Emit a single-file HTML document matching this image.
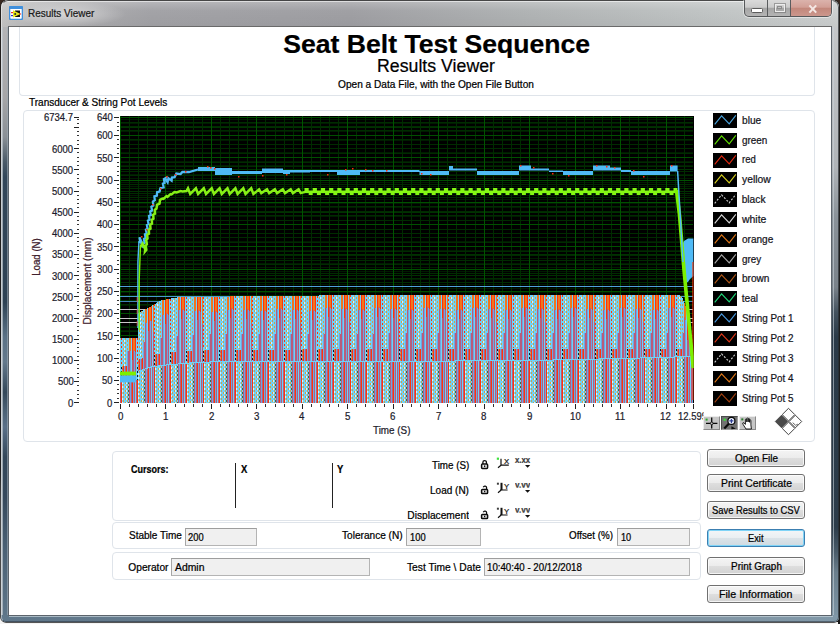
<!DOCTYPE html>
<html lang="en"><head><meta charset="utf-8"><title>Results Viewer</title>
<style>
html,body{margin:0;padding:0}
body{width:840px;height:624px;overflow:hidden;position:relative;background:#4a3a30;font-family:"Liberation Sans",sans-serif;font-size:10px;color:#000}
.abs,.t,.box,.inp,.btn,svg.chart,svg.ic{position:absolute}
.t{white-space:nowrap;line-height:1;transform-origin:0 50%;display:block;-webkit-text-stroke:0.22px}
#win{position:absolute;left:0.6px;top:0;width:838px;height:621.5px;border-radius:7px 7px 5px 5px;background:#a8a8a8;overflow:hidden;box-shadow:0 0 0 0.8px #202020}
#win:after{content:"";position:absolute;left:0;top:0;right:0;bottom:0;border:1px solid rgba(255,255,255,.45);border-top:1px solid rgba(50,50,50,.85);border-right:1.4px solid rgba(40,44,48,.7);border-radius:7px 7px 5px 5px;border-bottom-color:rgba(40,50,60,.5)}
#client{position:absolute;left:8px;top:26px;width:822px;height:588px;background:#fff;border:1px solid #5c646c;border-top-color:#6a6a6a}
.box{border:1px solid #dfe4ea;border-radius:4px;box-sizing:border-box;background:transparent}
.inp{box-sizing:border-box;border:1px solid #b4b4b4;border-top-color:#9d9d9d;border-left-color:#a6a6a6;background:#f0f0f0}
.btn{box-sizing:border-box;width:98px;height:18px;border:1px solid #707070;border-radius:3px;
 background:linear-gradient(#f4f4f4 0%,#ececec 48%,#dedede 52%,#d2d2d2 100%);box-shadow:inset 0 0 0 1px rgba(255,255,255,.75)}
.btn.foc{border-color:#3c7fb1;box-shadow:inset 0 0 0 1px #7fd4f7;background:linear-gradient(#f3f6f8 0%,#eaeff2 48%,#dbe3e8 52%,#cfdae1 100%)}
.lg{position:absolute;left:713px;width:24px;height:15px;background:#000}
</style></head>
<body>
<div class="abs" style="left:0;top:0;width:840px;height:624px;background:linear-gradient(180deg,#3a2a22 0,#241c18 30%,#101010 70%,#181818 100%)"></div>
<div class="abs" style="left:0;top:470px;width:3px;height:154px;background:linear-gradient(180deg,rgba(255,255,255,0),#e8e8e8 30px,#f4f4f4)"></div>
<div class="abs" style="left:0;top:621.5px;width:838px;height:3px;background:#f4f4f4"></div>
<div id="win">
<div class="abs" style="left:0;top:0;width:838px;height:27px;background:linear-gradient(90deg,#c6c6c6 0,#b0b0b2 60px,#a3a3a7 150px,#a0a0a4 350px,#b0b3b4 520px,#c0c4c4 700px,#cdd0d0 838px)"></div>
<div class="abs" style="left:0;top:0;width:838px;height:27px;background:linear-gradient(180deg,rgba(255,255,255,.25) 0,rgba(255,255,255,0) 40%,rgba(0,0,0,.04) 100%)"></div>
<div class="abs" style="left:0;top:27px;width:8px;height:595px;background:linear-gradient(180deg,#b4b4b6 0,#a6a6a8 70px,#8a9096 110px,#4a5a68 135px,#33475a 150px,#2e4254 275px,#5b7286 310px,#64798c 335px,#34485a 365px,#4c6276 385px,#5a7088 400px,#33475a 430px,#36495c 470px,#4a6074 520px,#5f778a 595px)"></div>
<div class="abs" style="left:0;top:27px;width:2.4px;height:595px;background:rgba(190,198,204,.75)"></div>
<div class="abs" style="left:6px;top:27px;width:1.2px;height:590px;background:rgba(160,172,182,.6)"></div>
<div class="abs" style="left:831px;top:27px;width:7px;height:595px;background:linear-gradient(180deg,#c4c6c8 0,#b0b4b8 140px,#8a9299 190px,#7a828a 260px,#44525e 285px,#2a3a48 310px,#2c3c4a 500px,#4a5c6a 525px,#6a7e8c 545px,#8098a8 595px)"></div>
<div class="abs" style="left:832px;top:27px;width:1.2px;height:590px;background:rgba(200,210,216,.6)"></div>
<div class="abs" style="left:0;top:615px;width:838px;height:7px;background:linear-gradient(90deg,#5f778a 0,#6b7f90 300px,#8495a2 600px,#8098a8 838px)"></div>
<div class="abs" style="left:8px;top:616px;width:824px;height:1px;background:rgba(200,212,220,.7)"></div>
<div class="abs" style="left:4px;top:1px;width:830px;height:1px;background:rgba(255,255,255,.55)"></div>
<div class="abs" style="left:6px;top:1px;width:120px;height:26px;background:radial-gradient(ellipse at center,rgba(255,255,255,.5) 0%,rgba(255,255,255,0) 70%)"></div>
</div>
<svg class="ic" style="left:9px;top:6px" width="14" height="14" viewBox="0 0 14 14"><rect x="0.5" y="0.5" width="13" height="13" rx="1.5" fill="#fff" stroke="#3f8fdc" stroke-width="1.6"/><rect x="0.8" y="0.8" width="12.4" height="2.2" fill="#3f8fdc"/><rect x="6" y="4.5" width="5" height="6.5" fill="#111"/><path d="M4 4.2L11.5 8 4 11.6Z" fill="#e8e81a"/><circle cx="6.2" cy="8" r="1" fill="#223"/><rect x="2" y="6" width="2" height="1.2" fill="#e33"/><rect x="2" y="9" width="2" height="1.2" fill="#33c"/><rect x="10.5" y="7.4" width="1.6" height="1.2" fill="#e33"/></svg>
<span class="t" style="left:27.50px;top:7px;font-size:10.6px;color:#1a1a1a;transform:scaleX(0.9405);line-height:12px;">Results Viewer</span>
<div class="abs" style="left:743.5px;top:0;width:88.5px;height:16.5px;border:1px solid #56585a;border-top:none;border-radius:0 0 5px 5px;box-sizing:border-box;background:linear-gradient(#dadada 0%,#cbcbcb 45%,#a6a6a6 52%,#b4b4b4 100%);overflow:hidden;box-shadow:0 0 0 1px rgba(255,255,255,.45)"><div class="abs" style="left:22.5px;top:0;width:1px;height:16px;background:#5a5c5e"></div><div class="abs" style="left:45.7px;top:0;width:1px;height:16px;background:#5a5c5e"></div><div class="abs" style="left:46.7px;top:0;width:42px;height:16px;background:linear-gradient(#dbb3ac 0%,#d29f96 45%,#c2877b 52%,#cc978d 100%)"></div><div class="abs" style="left:6.5px;top:8px;width:9.5px;height:3px;background:#fff;border:1px solid #5c5c5c;border-radius:1.5px;box-sizing:content-box"></div><div class="abs" style="left:30px;top:3.6px;width:8px;height:6px;border:1px solid #ededed;box-shadow:0 0 0 1px rgba(110,110,110,.55);box-sizing:content-box"></div><div class="abs" style="left:32.5px;top:6px;width:3px;height:1.4px;border:1px solid #8c8c8c;box-sizing:content-box"></div><svg class="ic" style="left:62.5px;top:3.6px" width="12" height="10" viewBox="0 0 12 10"><path d="M2.4 1.4L9.2 8.6M9.2 1.4L2.4 8.6" stroke="#f4e7e4" stroke-width="2.1"/></svg></div>
<div id="client"></div>
<div class="box" style="left:19px;top:27px;width:796px;height:69px;border-top:none;border-radius:0 0 4px 4px"></div>
<span class="t" style="left:283.20px;top:29px;font-size:26.6px;font-weight:bold;line-height:30px;">Seat Belt Test Sequence</span>
<span class="t" style="left:377.30px;top:56px;font-size:17.6px;transform:scaleX(1.0081);line-height:20px;">Results Viewer</span>
<span class="t" style="left:338.00px;top:79px;font-size:10.3px;transform:scaleX(0.9838);line-height:11px;">Open a Data File, with the Open File Button</span>
<span class="t" style="left:28.80px;top:97px;font-size:10.3px;transform:scaleX(0.9735);line-height:11px;">Transducer &amp; String Pot Levels</span>
<div class="box" style="left:23px;top:110px;width:792px;height:332px"></div>
<svg class="chart" width="578" height="290" viewBox="118 115 578 290" style="left:118px;top:115px" shape-rendering="crispEdges"><defs><clipPath id="pc"><rect x="119.5" y="116" width="574.2" height="287"/></clipPath></defs><rect x="119.5" y="116" width="574.2" height="287" fill="#000"/>
<path d="M120 398.5H693M120 394.5H693M120 390.5H693M120 385.5H693M120 377.5H693M120 373.5H693M120 368.5H693M120 364.5H693M120 356.5H693M120 351.5H693M120 347.5H693M120 343.5H693M120 335.5H693M120 330.5H693M120 326.5H693M120 322.5H693M120 313.5H693M120 309.5H693M120 305.5H693M120 301.5H693M120 292.5H693M120 288.5H693M120 284.5H693M120 279.5H693M120 271.5H693M120 267.5H693M120 263.5H693M120 258.5H693M120 250.5H693M120 246.5H693M120 241.5H693M120 237.5H693M120 229.5H693M120 224.5H693M120 220.5H693M120 216.5H693M120 207.5H693M120 203.5H693M120 199.5H693M120 195.5H693M120 186.5H693M120 182.5H693M120 178.5H693M120 174.5H693M120 165.5H693M120 161.5H693M120 157.5H693M120 152.5H693M120 144.5H693M120 140.5H693M120 135.5H693M120 131.5H693M120 123.5H693M120 119.5H693" stroke="#001c00" stroke-width="1" fill="none"/>
<path d="M120 402.5H693M120 381.5H693M120 360.5H693M120 339.5H693M120 318.5H693M120 296.5H693M120 275.5H693M120 254.5H693M120 233.5H693M120 212.5H693M120 191.5H693M120 169.5H693M120 148.5H693M120 127.5H693" stroke="#003200" stroke-width="1" fill="none"/>
<path d="M129.5 116V403M138.5 116V403M147.5 116V403M156.5 116V403M175.5 116V403M184.5 116V403M193.5 116V403M202.5 116V403M220.5 116V403M229.5 116V403M238.5 116V403M247.5 116V403M265.5 116V403M275.5 116V403M284.5 116V403M293.5 116V403M311.5 116V403M320.5 116V403M329.5 116V403M338.5 116V403M356.5 116V403M365.5 116V403M375.5 116V403M384.5 116V403M402.5 116V403M411.5 116V403M420.5 116V403M429.5 116V403M447.5 116V403M456.5 116V403M465.5 116V403M475.5 116V403M493.5 116V403M502.5 116V403M511.5 116V403M520.5 116V403M538.5 116V403M547.5 116V403M556.5 116V403M566.5 116V403M584.5 116V403M593.5 116V403M602.5 116V403M611.5 116V403M629.5 116V403M638.5 116V403M647.5 116V403M656.5 116V403M675.5 116V403M684.5 116V403" stroke="#002c00" stroke-width="1" fill="none"/>
<path d="M120 398.5H693M120 393.5H693M120 389.5H693M120 384.5H693M120 376.5H693M120 371.5H693M120 367.5H693M120 362.5H693M120 353.5H693M120 349.5H693M120 344.5H693M120 340.5H693M120 331.5H693M120 327.5H693M120 322.5H693M120 318.5H693M120 309.5H693M120 304.5H693M120 300.5H693M120 295.5H693M120 286.5H693M120 282.5H693M120 278.5H693M120 273.5H693M120 264.5H693M120 260.5H693M120 255.5H693M120 251.5H693M120 242.5H693M120 237.5H693M120 233.5H693M120 229.5H693M120 220.5H693M120 215.5H693M120 211.5H693M120 206.5H693M120 197.5H693M120 193.5H693M120 188.5H693M120 184.5H693M120 175.5H693M120 171.5H693M120 166.5H693M120 162.5H693M120 153.5H693M120 148.5H693M120 144.5H693M120 139.5H693M120 130.5H693M120 126.5H693M120 122.5H693" stroke="#002c00" stroke-width="1" fill="none"/>
<path d="M120.5 116V403M165.5 116V403M211.5 116V403M256.5 116V403M302.5 116V403M347.5 116V403M393.5 116V403M438.5 116V403M484.5 116V403M529.5 116V403M575.5 116V403M620.5 116V403M666.5 116V403" stroke="#005400" stroke-width="1" fill="none"/>
<path d="M120 402.5H693M120 380.5H693M120 358.5H693M120 335.5H693M120 313.5H693M120 291.5H693M120 269.5H693M120 246.5H693M120 224.5H693M120 202.5H693M120 180.5H693M120 157.5H693M120 135.5H693M120 117.5H693" stroke="#005000" stroke-width="1" fill="none"/><g clip-path="url(#pc)"><path d="M120 286.5H693" stroke="#4fa3d8" stroke-width="1.3"/>
<path d="M120 296.5H693" stroke="#4a9ad0" stroke-width="1.3"/>
<path d="M120 301.5H693" stroke="#3f86b8" stroke-width="1.3"/>
<path d="M120 309.5H693" stroke="#c8c8c8" stroke-width="1"/>
<path d="M120 318.5H693" stroke="#c8c8c8" stroke-width="1"/>
<path d="M120 322.5H693" stroke="#c8c8c8" stroke-width="1"/><path d="M120.5 338.0V380.0M121.5 338.0V380.0M122.5 338.0V366.0M122.5 380.0V403.0M123.5 338.0V366.0M123.5 380.0V403.0M124.5 338.0V366.0M124.5 380.0V403.0M125.5 338.0V366.0M125.5 380.0V403.0M126.5 338.0V366.0M126.5 380.0V403.0M127.5 338.0V351.0M127.5 380.0V403.0M128.5 338.0V351.0M128.5 380.0V403.0M131.5 338.0V380.0M135.5 380.0V403.0M136.5 338.0V380.0M137.5 338.0V380.0M138.5 313.0V359.0M138.5 371.0V403.0M139.5 312.2V358.7M139.5 370.7V403.0M140.5 311.5V358.3M140.5 370.3V403.0M141.5 311.0V358.0M141.5 370.0V403.0M142.5 310.5V357.7M142.5 369.7V403.0M143.5 310.0V342.3M143.5 369.3V403.0M144.5 309.5V342.0M144.5 369.0V403.0M147.5 308.0V368.0M151.5 366.9V403.0M152.5 305.3V366.7M154.5 304.1V366.5M155.5 303.5V353.9M155.5 366.3V403.0M156.5 302.9V353.7M156.5 366.2V403.0M157.5 302.3V353.5M157.5 366.1V403.0M158.5 301.7V353.2M158.5 365.9V403.0M159.5 301.1V353.0M159.5 365.8V403.0M160.5 300.5V337.8M160.5 365.7V403.0M161.5 300.3V337.6M161.5 365.5V403.0M164.5 299.7V365.1M168.5 364.7V403.0M169.5 298.7V364.7M170.5 298.5V364.6M171.5 298.4V351.3M171.5 364.5V403.0M172.5 298.2V351.3M172.5 364.4V403.0M173.5 298.1V351.2M173.5 364.3V403.0M174.5 297.9V351.1M174.5 364.2V403.0M175.5 297.8V351.1M175.5 364.1V403.0M176.5 297.6V336.0M176.5 364.1V403.0M177.5 297.4V335.9M177.5 364.0V403.0M180.5 297.0V363.7M184.5 363.4V403.0M185.5 296.9V363.3M186.5 296.9V363.2M187.5 296.9V350.3M187.5 363.1V403.0M188.5 296.9V350.3M188.5 363.0V403.0M189.5 296.9V350.2M189.5 362.9V403.0M190.5 296.9V350.1M190.5 362.9V403.0M191.5 296.9V350.1M191.5 362.8V403.0M192.5 296.9V335.0M192.5 362.7V403.0M193.5 296.9V334.9M193.5 362.6V403.0M196.5 296.8V362.3M200.5 362.0V403.0M201.5 296.8V362.0M203.5 296.8V362.0M204.5 296.8V349.5M204.5 362.0V403.0M205.5 296.7V349.5M205.5 362.0V403.0M206.5 296.7V349.5M206.5 362.0V403.0M207.5 296.7V349.5M207.5 362.0V403.0M208.5 296.7V349.5M208.5 362.0V403.0M209.5 296.7V334.4M209.5 362.0V403.0M210.5 296.7V334.4M210.5 361.9V403.0M213.5 296.6V361.9M217.5 361.9V403.0M218.5 296.6V361.9M219.5 296.6V361.9M220.5 296.6V349.4M220.5 361.9V403.0M221.5 296.5V349.4M221.5 361.9V403.0M222.5 296.5V349.4M222.5 361.9V403.0M223.5 296.5V349.4M223.5 361.9V403.0M224.5 296.5V349.4M224.5 361.9V403.0M225.5 296.5V334.4M225.5 361.9V403.0M226.5 296.5V334.3M226.5 361.9V403.0M229.5 296.5V361.9M233.5 361.8V403.0M234.5 296.4V361.8M235.5 296.4V361.8M236.5 296.4V349.3M236.5 361.8V403.0M237.5 296.4V349.3M237.5 361.8V403.0M238.5 296.3V349.3M238.5 361.8V403.0M239.5 296.3V349.3M239.5 361.8V403.0M240.5 296.3V349.3M240.5 361.8V403.0M241.5 296.3V334.3M241.5 361.8V403.0M242.5 296.3V334.2M242.5 361.8V403.0M245.5 296.3V361.8M249.5 361.8V403.0M250.5 296.2V361.8M252.5 296.2V361.7M253.5 296.2V349.2M253.5 361.7V403.0M254.5 296.2V349.2M254.5 361.7V403.0M255.5 296.1V349.2M255.5 361.7V403.0M256.5 296.1V349.2M256.5 361.7V403.0M257.5 296.1V349.2M257.5 361.7V403.0M258.5 296.1V334.2M258.5 361.7V403.0M259.5 296.1V334.1M259.5 361.7V403.0M262.5 296.1V361.7M266.5 361.7V403.0M267.5 296.0V361.7M268.5 296.0V361.7M269.5 296.0V349.1M269.5 361.7V403.0M270.5 296.0V349.1M270.5 361.6V403.0M271.5 295.9V349.1M271.5 361.6V403.0M272.5 295.9V349.1M272.5 361.6V403.0M273.5 295.9V349.1M273.5 361.6V403.0M274.5 295.9V334.1M274.5 361.6V403.0M275.5 295.9V334.1M275.5 361.6V403.0M278.5 295.9V361.6M282.5 361.6V403.0M283.5 295.8V361.6M284.5 295.8V361.6M285.5 295.8V349.0M285.5 361.6V403.0M286.5 295.8V349.0M286.5 361.6V403.0M287.5 295.8V349.0M287.5 361.6V403.0M288.5 295.7V349.0M288.5 361.6V403.0M289.5 295.7V349.0M289.5 361.6V403.0M290.5 295.7V334.0M290.5 361.6V403.0M291.5 295.7V334.0M291.5 361.5V403.0M294.5 295.7V361.5M298.5 361.5V403.0M299.5 295.6V361.5M301.5 295.6V361.5M302.5 295.6V348.9M302.5 361.5V403.0M303.5 295.6V348.9M303.5 361.5V403.0M304.5 295.6V348.9M304.5 361.5V403.0M305.5 295.6V348.9M305.5 361.5V403.0M306.5 295.6V348.9M306.5 361.5V403.0M307.5 295.5V333.9M307.5 361.5V403.0M308.5 295.5V333.9M308.5 361.5V403.0M311.5 295.5V361.5M315.5 361.4V403.0M316.5 295.5V361.4M317.5 295.5V361.4M318.5 295.5V348.8M318.5 361.4V403.0M319.5 295.4V348.8M319.5 361.4V403.0M320.5 295.4V348.8M320.5 361.4V403.0M321.5 295.4V348.8M321.5 361.4V403.0M322.5 295.4V348.8M322.5 361.4V403.0M323.5 295.4V333.8M323.5 361.4V403.0M324.5 295.4V333.8M324.5 361.4V403.0M327.5 295.4V361.4M331.5 361.4V403.0M332.5 295.3V361.4M333.5 295.3V361.4M334.5 295.3V348.7M334.5 361.4V403.0M335.5 295.3V348.7M335.5 361.4V403.0M336.5 295.3V348.7M336.5 361.4V403.0M337.5 295.3V348.7M337.5 361.4V403.0M338.5 295.3V348.7M338.5 361.4V403.0M339.5 295.3V333.7M339.5 361.4V403.0M340.5 295.3V333.7M340.5 361.4V403.0M343.5 295.3V361.4M347.5 361.3V403.0M348.5 295.2V361.3M350.5 295.2V361.3M351.5 295.2V348.6M351.5 361.3V403.0M352.5 295.2V348.6M352.5 361.3V403.0M353.5 295.2V348.6M353.5 361.3V403.0M354.5 295.2V348.6M354.5 361.3V403.0M355.5 295.2V348.6M355.5 361.3V403.0M356.5 295.2V333.6M356.5 361.3V403.0M357.5 295.1V333.6M357.5 361.3V403.0M360.5 295.1V361.3M364.5 361.3V403.0M365.5 295.1V361.3M366.5 295.1V361.3M367.5 295.1V348.5M367.5 361.3V403.0M368.5 295.1V348.5M368.5 361.3V403.0M369.5 295.0V348.5M369.5 361.3V403.0M370.5 295.0V348.5M370.5 361.3V403.0M371.5 295.0V348.5M371.5 361.3V403.0M372.5 295.0V333.5M372.5 361.3V403.0M373.5 295.0V333.5M373.5 361.3V403.0M376.5 295.0V361.2M380.5 361.2V403.0M381.5 295.0V361.2M382.5 294.9V361.2M383.5 294.9V348.4M383.5 361.2V403.0M384.5 294.9V348.4M384.5 361.2V403.0M385.5 294.9V348.4M385.5 361.2V403.0M386.5 294.9V348.4M386.5 361.2V403.0M387.5 294.9V348.4M387.5 361.2V403.0M388.5 294.9V333.4M388.5 361.2V403.0M389.5 294.9V333.4M389.5 361.2V403.0M392.5 294.9V361.2M396.5 361.2V403.0M397.5 294.8V361.2M399.5 294.8V361.2M400.5 294.8V348.3M400.5 361.2V403.0M401.5 294.8V348.3M401.5 361.2V403.0M402.5 294.8V348.3M402.5 361.2V403.0M403.5 294.8V348.3M403.5 361.2V403.0M404.5 294.8V348.3M404.5 361.2V403.0M405.5 294.8V333.3M405.5 361.1V403.0M406.5 294.8V333.3M406.5 361.1V403.0M409.5 294.8V361.1M413.5 361.1V403.0M414.5 294.8V361.1M415.5 294.8V361.1M416.5 294.8V348.3M416.5 361.1V403.0M417.5 294.8V348.3M417.5 361.1V403.0M418.5 294.8V348.3M418.5 361.1V403.0M419.5 294.8V348.3M419.5 361.1V403.0M420.5 294.8V348.3M420.5 361.1V403.0M421.5 294.8V333.3M421.5 361.1V403.0M422.5 294.8V333.3M422.5 361.1V403.0M425.5 294.8V361.1M429.5 361.1V403.0M430.5 294.8V361.1M431.5 294.8V361.1M432.5 294.8V348.3M432.5 361.1V403.0M433.5 294.8V348.3M433.5 361.1V403.0M434.5 294.8V348.3M434.5 361.1V403.0M435.5 294.8V348.3M435.5 361.1V403.0M436.5 294.8V348.3M436.5 361.0V403.0M437.5 294.8V333.3M437.5 361.0V403.0M438.5 294.8V333.3M438.5 361.0V403.0M441.5 294.8V361.0M445.5 361.0V403.0M446.5 294.8V361.0M448.5 294.8V361.0M449.5 294.8V348.2M449.5 361.0V403.0M450.5 294.8V348.2M450.5 361.0V403.0M451.5 294.8V348.2M451.5 361.0V403.0M452.5 294.8V348.2M452.5 361.0V403.0M453.5 294.8V348.2M453.5 361.0V403.0M454.5 294.8V333.2M454.5 361.0V403.0M455.5 294.8V333.2M455.5 360.9V403.0M458.5 294.8V360.9M462.5 360.9V403.0M463.5 294.8V360.9M464.5 294.8V360.9M465.5 294.8V348.2M465.5 360.9V403.0M466.5 294.8V348.2M466.5 360.8V403.0M467.5 294.8V348.2M467.5 360.8V403.0M468.5 294.8V348.2M468.5 360.8V403.0M469.5 294.8V348.2M469.5 360.8V403.0M470.5 294.7V333.2M470.5 360.8V403.0M471.5 294.7V333.2M471.5 360.8V403.0M474.5 294.7V360.8M478.5 360.7V403.0M479.5 294.7V360.7M480.5 294.7V360.7M481.5 294.7V348.2M481.5 360.7V403.0M482.5 294.7V348.2M482.5 360.7V403.0M483.5 294.7V348.2M483.5 360.7V403.0M484.5 294.7V348.2M484.5 360.7V403.0M485.5 294.7V348.2M485.5 360.6V403.0M486.5 294.7V333.2M486.5 360.6V403.0M487.5 294.7V333.2M487.5 360.6V403.0M490.5 294.7V360.6M494.5 360.6V403.0M495.5 294.7V360.6M497.5 294.7V360.5M498.5 294.7V348.2M498.5 360.5V403.0M499.5 294.7V348.2M499.5 360.5V403.0M500.5 294.7V348.2M500.5 360.5V403.0M501.5 294.7V348.2M501.5 360.5V403.0M502.5 294.7V348.2M502.5 360.5V403.0M503.5 294.7V333.2M503.5 360.5V403.0M504.5 294.7V333.2M504.5 360.5V403.0M507.5 294.7V360.4M511.5 360.4V403.0M512.5 294.7V360.4M513.5 294.7V360.4M514.5 294.7V348.2M514.5 360.4V403.0M515.5 294.7V348.2M515.5 360.4V403.0M516.5 294.7V348.2M516.5 360.3V403.0M517.5 294.7V348.2M517.5 360.3V403.0M518.5 294.7V348.2M518.5 360.3V403.0M519.5 294.7V333.2M519.5 360.3V403.0M520.5 294.7V333.2M520.5 360.3V403.0M523.5 294.7V360.3M527.5 360.2V403.0M528.5 294.7V360.2M529.5 294.7V360.2M530.5 294.7V348.2M530.5 360.2V403.0M531.5 294.7V348.2M531.5 360.2V403.0M532.5 294.7V348.2M532.5 360.2V403.0M533.5 294.7V348.2M533.5 360.2V403.0M534.5 294.7V348.2M534.5 360.2V403.0M535.5 294.7V333.2M535.5 360.1V403.0M536.5 294.7V333.2M536.5 360.1V403.0M539.5 294.7V360.1M543.5 360.1V403.0M544.5 294.7V360.1M546.5 294.7V360.0M547.5 294.7V348.1M547.5 360.0V403.0M548.5 294.7V348.1M548.5 360.0V403.0M549.5 294.7V348.1M549.5 360.0V403.0M550.5 294.7V348.1M550.5 360.0V403.0M551.5 294.7V348.1M551.5 360.0V403.0M552.5 294.7V333.1M552.5 360.0V403.0M553.5 294.7V333.1M553.5 359.9V403.0M556.5 294.7V359.9M560.5 359.8V403.0M561.5 294.7V359.8M562.5 294.7V359.7M563.5 294.7V348.1M563.5 359.7V403.0M564.5 294.7V348.1M564.5 359.7V403.0M565.5 294.7V348.1M565.5 359.7V403.0M566.5 294.7V348.1M566.5 359.7V403.0M567.5 294.7V348.1M567.5 359.6V403.0M568.5 294.7V333.1M568.5 359.6V403.0M569.5 294.7V333.1M569.5 359.6V403.0M572.5 294.7V359.5M576.5 359.4V403.0M577.5 294.7V359.4M578.5 294.7V359.4M579.5 294.7V348.1M579.5 359.4V403.0M580.5 294.7V348.1M580.5 359.4V403.0M581.5 294.7V348.1M581.5 359.3V403.0M582.5 294.7V348.1M582.5 359.3V403.0M583.5 294.7V348.1M583.5 359.3V403.0M584.5 294.7V333.1M584.5 359.3V403.0M585.5 294.7V333.1M585.5 359.2V403.0M588.5 294.7V359.2M592.5 359.1V403.0M593.5 294.7V359.1M595.5 294.7V359.0M596.5 294.7V348.1M596.5 359.0V403.0M597.5 294.7V348.1M597.5 359.0V403.0M598.5 294.7V348.1M598.5 359.0V403.0M599.5 294.7V348.1M599.5 358.9V403.0M600.5 294.7V348.1M600.5 358.9V403.0M601.5 294.7V333.1M601.5 358.9V403.0M602.5 294.7V333.1M602.5 358.9V403.0M605.5 294.7V358.8M609.5 358.7V403.0M610.5 294.6V358.7M611.5 294.6V358.7M612.5 294.6V348.1M612.5 358.7V403.0M613.5 294.6V348.1M613.5 358.6V403.0M614.5 294.6V348.1M614.5 358.6V403.0M615.5 294.6V348.1M615.5 358.6V403.0M616.5 294.6V348.1M616.5 358.6V403.0M617.5 294.6V333.1M617.5 358.6V403.0M618.5 294.6V333.1M618.5 358.5V403.0M621.5 294.6V358.5M625.5 358.4V403.0M626.5 294.6V358.3M627.5 294.6V358.3M628.5 294.6V348.1M628.5 358.3V403.0M629.5 294.6V348.1M629.5 358.2V403.0M630.5 294.6V348.1M630.5 358.2V403.0M631.5 294.6V348.1M631.5 358.2V403.0M632.5 294.6V348.1M632.5 358.2V403.0M633.5 294.6V333.0M633.5 358.1V403.0M634.5 294.6V333.0M634.5 358.1V403.0M637.5 294.6V358.0M641.5 357.9V403.0M642.5 294.6V357.9M644.5 294.6V357.8M645.5 294.6V348.0M645.5 357.8V403.0M646.5 294.6V348.0M646.5 357.8V403.0M647.5 294.6V348.0M647.5 357.7V403.0M648.5 294.6V348.0M648.5 357.7V403.0M649.5 294.6V348.0M649.5 357.7V403.0M650.5 294.6V333.0M650.5 357.6V403.0M651.5 294.6V333.0M651.5 357.6V403.0M654.5 294.6V357.5M658.5 357.4V403.0M659.5 294.6V357.4M660.5 294.6V357.3M661.5 294.6V348.0M661.5 357.3V403.0M662.5 294.6V348.0M662.5 357.3V403.0M663.5 294.6V348.0M663.5 357.3V403.0M664.5 294.6V348.0M664.5 357.2V403.0M665.5 294.6V348.0M665.5 357.2V403.0M666.5 294.6V333.0M666.5 357.2V403.0M667.5 294.6V333.0M667.5 357.1V403.0M670.5 294.6V357.1M674.5 356.9V403.0M675.5 294.6V356.9M676.5 294.6V356.9M677.5 294.6V348.0M677.5 356.9V403.0M678.5 294.6V348.0M678.5 356.8V403.0M679.5 294.6V348.0M679.5 356.8V403.0M680.5 295.7V348.0M680.5 356.8V403.0M681.5 296.9V348.0M681.5 356.8V403.0M682.5 298.0V333.0M682.5 356.8V403.0M683.5 300.7V333.0M683.5 356.8V403.0M686.5 311.3V356.8M690.5 356.8V403.0M691.5 344.8V356.8" stroke="#70d2f8" stroke-width="1" fill="none"/>
<path d="M120.5 380.0V403.0M122.5 366.0V380.0M125.5 366.0V380.0M128.5 351.0V380.0M129.5 351.0V380.0M129.5 380.0V403.0M131.5 380.0V403.0M132.5 360.0V380.0M133.5 350.0V380.0M134.5 380.0V403.0M135.5 352.0V380.0M136.5 380.0V403.0M138.5 359.0V371.0M141.5 358.0V370.0M144.5 342.0V369.0M145.5 323.0V368.7M145.5 368.7V403.0M147.5 368.0V403.0M148.5 330.5V367.7M149.5 320.0V367.3M150.5 367.0V403.0M151.5 320.9V366.9M152.5 366.7V403.0M153.5 331.7V366.6M155.5 353.9V366.3M158.5 353.2V365.9M161.5 337.6V365.5M162.5 315.1V365.4M162.5 365.4V403.0M164.5 365.1V403.0M165.5 323.5V365.0M166.5 313.3V364.9M167.5 364.8V403.0M168.5 314.9V364.7M169.5 364.7V403.0M171.5 351.3V364.5M174.5 351.1V364.2M177.5 335.9V364.0M178.5 310.3V363.9M178.5 363.9V403.0M180.5 363.7V403.0M181.5 319.0V363.6M182.5 309.0V363.5M183.5 363.5V403.0M184.5 311.0V363.4M185.5 363.3V403.0M187.5 350.3V363.1M190.5 350.1V362.9M193.5 334.9V362.6M194.5 310.9V362.5M194.5 362.5V403.0M196.5 362.3V403.0M197.5 319.8V362.3M198.5 309.8V362.2M199.5 362.1V403.0M200.5 311.8V362.0M201.5 362.0V403.0M202.5 323.8V362.0M204.5 349.5V362.0M207.5 349.5V362.0M210.5 334.4V361.9M211.5 311.7V361.9M211.5 361.9V403.0M213.5 361.9V403.0M214.5 320.6V361.9M215.5 310.6V361.9M216.5 361.9V403.0M217.5 312.6V361.9M218.5 361.9V403.0M220.5 349.4V361.9M223.5 349.4V361.9M226.5 334.3V361.9M227.5 309.5V361.9M227.5 361.9V403.0M229.5 361.9V403.0M230.5 318.4V361.9M231.5 308.4V361.8M232.5 361.8V403.0M233.5 310.4V361.8M234.5 361.8V403.0M236.5 349.3V361.8M239.5 349.3V361.8M242.5 334.2V361.8M243.5 310.3V361.8M243.5 361.8V403.0M245.5 361.8V403.0M246.5 319.2V361.8M247.5 309.2V361.8M248.5 361.8V403.0M249.5 311.2V361.8M250.5 361.8V403.0M251.5 323.2V361.7M253.5 349.2V361.7M256.5 349.2V361.7M259.5 334.1V361.7M260.5 311.1V361.7M260.5 361.7V403.0M262.5 361.7V403.0M263.5 320.0V361.7M264.5 310.0V361.7M265.5 361.7V403.0M266.5 312.0V361.7M267.5 361.7V403.0M269.5 349.1V361.7M272.5 349.1V361.6M275.5 334.1V361.6M276.5 308.9V361.6M276.5 361.6V403.0M278.5 361.6V403.0M279.5 317.9V361.6M280.5 307.8V361.6M281.5 361.6V403.0M282.5 309.8V361.6M283.5 361.6V403.0M285.5 349.0V361.6M288.5 349.0V361.6M291.5 334.0V361.5M292.5 309.7V361.5M292.5 361.5V403.0M294.5 361.5V403.0M295.5 318.7V361.5M296.5 308.6V361.5M297.5 361.5V403.0M298.5 310.6V361.5M299.5 361.5V403.0M300.5 322.6V361.5M302.5 348.9V361.5M305.5 348.9V361.5M308.5 333.9V361.5M309.5 310.5V361.5M309.5 361.5V403.0M311.5 361.5V403.0M312.5 319.5V361.5M313.5 309.5V361.5M314.5 361.5V403.0M315.5 311.5V361.4M316.5 361.4V403.0M318.5 348.8V361.4M321.5 348.8V361.4M324.5 333.8V361.4M325.5 308.4V361.4M325.5 361.4V403.0M327.5 361.4V403.0M328.5 317.4V361.4M329.5 307.4V361.4M330.5 361.4V403.0M331.5 309.4V361.4M332.5 361.4V403.0M334.5 348.7V361.4M337.5 348.7V361.4M340.5 333.7V361.4M341.5 309.3V361.4M341.5 361.4V403.0M343.5 361.4V403.0M344.5 318.2V361.4M345.5 308.2V361.4M346.5 361.3V403.0M347.5 310.2V361.3M348.5 361.3V403.0M349.5 322.2V361.3M351.5 348.6V361.3M354.5 348.6V361.3M357.5 333.6V361.3M358.5 310.1V361.3M358.5 361.3V403.0M360.5 361.3V403.0M361.5 319.1V361.3M362.5 309.1V361.3M363.5 361.3V403.0M364.5 311.1V361.3M365.5 361.3V403.0M367.5 348.5V361.3M370.5 348.5V361.3M373.5 333.5V361.3M374.5 308.0V361.3M374.5 361.3V403.0M376.5 361.2V403.0M377.5 317.0V361.2M378.5 307.0V361.2M379.5 361.2V403.0M380.5 309.0V361.2M381.5 361.2V403.0M383.5 348.4V361.2M386.5 348.4V361.2M389.5 333.4V361.2M390.5 308.9V361.2M390.5 361.2V403.0M392.5 361.2V403.0M393.5 317.9V361.2M394.5 307.8V361.2M395.5 361.2V403.0M396.5 309.8V361.2M397.5 361.2V403.0M398.5 321.8V361.2M400.5 348.3V361.2M403.5 348.3V361.2M406.5 333.3V361.1M407.5 309.8V361.1M407.5 361.1V403.0M409.5 361.1V403.0M410.5 318.8V361.1M411.5 308.8V361.1M412.5 361.1V403.0M413.5 310.8V361.1M414.5 361.1V403.0M416.5 348.3V361.1M419.5 348.3V361.1M422.5 333.3V361.1M423.5 307.8V361.1M423.5 361.1V403.0M425.5 361.1V403.0M426.5 316.8V361.1M427.5 306.8V361.1M428.5 361.1V403.0M429.5 308.8V361.1M430.5 361.1V403.0M432.5 348.3V361.1M435.5 348.3V361.1M438.5 333.3V361.0M439.5 308.8V361.0M439.5 361.0V403.0M441.5 361.0V403.0M442.5 317.8V361.0M443.5 307.8V361.0M444.5 361.0V403.0M445.5 309.8V361.0M446.5 361.0V403.0M447.5 321.8V361.0M449.5 348.2V361.0M452.5 348.2V361.0M455.5 333.2V360.9M456.5 309.8V360.9M456.5 360.9V403.0M458.5 360.9V403.0M459.5 318.8V360.9M460.5 308.8V360.9M461.5 360.9V403.0M462.5 310.8V360.9M463.5 360.9V403.0M465.5 348.2V360.9M468.5 348.2V360.8M471.5 333.2V360.8M472.5 307.7V360.8M472.5 360.8V403.0M474.5 360.8V403.0M475.5 316.7V360.8M476.5 306.7V360.7M477.5 360.7V403.0M478.5 308.7V360.7M479.5 360.7V403.0M481.5 348.2V360.7M484.5 348.2V360.7M487.5 333.2V360.6M488.5 308.7V360.6M488.5 360.6V403.0M490.5 360.6V403.0M491.5 317.7V360.6M492.5 307.7V360.6M493.5 360.6V403.0M494.5 309.7V360.6M495.5 360.6V403.0M496.5 321.7V360.5M498.5 348.2V360.5M501.5 348.2V360.5M504.5 333.2V360.5M505.5 309.7V360.4M505.5 360.4V403.0M507.5 360.4V403.0M508.5 318.7V360.4M509.5 308.7V360.4M510.5 360.4V403.0M511.5 310.7V360.4M512.5 360.4V403.0M514.5 348.2V360.4M517.5 348.2V360.3M520.5 333.2V360.3M521.5 307.7V360.3M521.5 360.3V403.0M523.5 360.3V403.0M524.5 316.7V360.3M525.5 306.7V360.2M526.5 360.2V403.0M527.5 308.7V360.2M528.5 360.2V403.0M530.5 348.2V360.2M533.5 348.2V360.2M536.5 333.2V360.1M537.5 308.7V360.1M537.5 360.1V403.0M539.5 360.1V403.0M540.5 317.7V360.1M541.5 307.7V360.1M542.5 360.1V403.0M543.5 309.7V360.1M544.5 360.1V403.0M545.5 321.7V360.1M547.5 348.1V360.0M550.5 348.1V360.0M553.5 333.1V359.9M554.5 309.7V359.9M554.5 359.9V403.0M556.5 359.9V403.0M557.5 318.7V359.9M558.5 308.7V359.8M559.5 359.8V403.0M560.5 310.7V359.8M561.5 359.8V403.0M563.5 348.1V359.7M566.5 348.1V359.7M569.5 333.1V359.6M570.5 307.7V359.6M570.5 359.6V403.0M572.5 359.5V403.0M573.5 316.7V359.5M574.5 306.7V359.5M575.5 359.5V403.0M576.5 308.7V359.4M577.5 359.4V403.0M579.5 348.1V359.4M582.5 348.1V359.3M585.5 333.1V359.2M586.5 308.7V359.2M586.5 359.2V403.0M588.5 359.2V403.0M589.5 317.7V359.2M590.5 307.7V359.1M591.5 359.1V403.0M592.5 309.7V359.1M593.5 359.1V403.0M594.5 321.7V359.1M596.5 348.1V359.0M599.5 348.1V358.9M602.5 333.1V358.9M603.5 309.7V358.9M603.5 358.9V403.0M605.5 358.8V403.0M606.5 318.7V358.8M607.5 308.7V358.8M608.5 358.8V403.0M609.5 310.7V358.7M610.5 358.7V403.0M612.5 348.1V358.7M615.5 348.1V358.6M618.5 333.1V358.5M619.5 307.6V358.5M619.5 358.5V403.0M621.5 358.5V403.0M622.5 316.6V358.4M623.5 306.6V358.4M624.5 358.4V403.0M625.5 308.6V358.4M626.5 358.3V403.0M628.5 348.1V358.3M631.5 348.1V358.2M634.5 333.0V358.1M635.5 308.6V358.1M635.5 358.1V403.0M637.5 358.0V403.0M638.5 317.6V358.0M639.5 307.6V358.0M640.5 357.9V403.0M641.5 309.6V357.9M642.5 357.9V403.0M643.5 321.6V357.8M645.5 348.0V357.8M648.5 348.0V357.7M651.5 333.0V357.6M652.5 309.6V357.6M652.5 357.6V403.0M654.5 357.5V403.0M655.5 318.6V357.5M656.5 308.6V357.5M657.5 357.4V403.0M658.5 310.6V357.4M659.5 357.4V403.0M661.5 348.0V357.3M664.5 348.0V357.2M667.5 333.0V357.1M668.5 307.6V357.1M668.5 357.1V403.0M670.5 357.1V403.0M671.5 316.6V357.0M672.5 306.6V357.0M673.5 357.0V403.0M674.5 308.6V356.9M675.5 356.9V403.0M677.5 348.0V356.9M680.5 348.0V356.8M683.5 333.0V356.8M684.5 317.3V356.8M684.5 356.8V403.0M686.5 356.8V403.0M687.5 339.7V356.8M688.5 335.0V356.8M689.5 356.8V403.0M690.5 351.4V356.8M691.5 356.8V403.0" stroke="#b85c7c" stroke-width="1" fill="none"/>
<path d="M121.5 380.0V403.0M123.5 366.0V380.0M126.5 366.0V380.0M132.5 338.0V360.0M132.5 380.0V403.0M135.5 338.0V352.0M137.5 380.0V403.0M139.5 358.7V370.7M142.5 357.7V369.7M148.5 307.5V330.5M148.5 367.7V403.0M151.5 305.9V320.9M154.5 366.5V403.0M156.5 353.7V366.2M159.5 353.0V365.8M165.5 299.5V323.5M165.5 365.0V403.0M168.5 298.9V314.9M170.5 364.6V403.0M172.5 351.3V364.4M175.5 351.1V364.1M181.5 297.0V319.0M181.5 363.6V403.0M184.5 297.0V311.0M186.5 363.2V403.0M188.5 350.3V363.0M191.5 350.1V362.8M197.5 296.8V319.8M197.5 362.3V403.0M200.5 296.8V311.8M203.5 362.0V403.0M205.5 349.5V362.0M208.5 349.5V362.0M214.5 296.6V320.6M214.5 361.9V403.0M217.5 296.6V312.6M219.5 361.9V403.0M221.5 349.4V361.9M224.5 349.4V361.9M230.5 296.4V318.4M230.5 361.9V403.0M233.5 296.4V310.4M235.5 361.8V403.0M237.5 349.3V361.8M240.5 349.3V361.8M246.5 296.2V319.2M246.5 361.8V403.0M249.5 296.2V311.2M252.5 361.7V403.0M254.5 349.2V361.7M257.5 349.2V361.7M263.5 296.0V320.0M263.5 361.7V403.0M266.5 296.0V312.0M268.5 361.7V403.0M270.5 349.1V361.6M273.5 349.1V361.6M279.5 295.9V317.9M279.5 361.6V403.0M282.5 295.8V309.8M284.5 361.6V403.0M286.5 349.0V361.6M289.5 349.0V361.6M295.5 295.7V318.7M295.5 361.5V403.0M298.5 295.6V310.6M301.5 361.5V403.0M303.5 348.9V361.5M306.5 348.9V361.5M312.5 295.5V319.5M312.5 361.5V403.0M315.5 295.5V311.5M317.5 361.4V403.0M319.5 348.8V361.4M322.5 348.8V361.4M328.5 295.4V317.4M328.5 361.4V403.0M331.5 295.4V309.4M333.5 361.4V403.0M335.5 348.7V361.4M338.5 348.7V361.4M344.5 295.2V318.2M344.5 361.4V403.0M347.5 295.2V310.2M350.5 361.3V403.0M352.5 348.6V361.3M355.5 348.6V361.3M361.5 295.1V319.1M361.5 361.3V403.0M364.5 295.1V311.1M366.5 361.3V403.0M368.5 348.5V361.3M371.5 348.5V361.3M377.5 295.0V317.0M377.5 361.2V403.0M380.5 295.0V309.0M382.5 361.2V403.0M384.5 348.4V361.2M387.5 348.4V361.2M393.5 294.9V317.9M393.5 361.2V403.0M396.5 294.8V309.8M399.5 361.2V403.0M401.5 348.3V361.2M404.5 348.3V361.2M410.5 294.8V318.8M410.5 361.1V403.0M413.5 294.8V310.8M415.5 361.1V403.0M417.5 348.3V361.1M420.5 348.3V361.1M426.5 294.8V316.8M426.5 361.1V403.0M429.5 294.8V308.8M431.5 361.1V403.0M433.5 348.3V361.1M436.5 348.3V361.0M442.5 294.8V317.8M442.5 361.0V403.0M445.5 294.8V309.8M448.5 361.0V403.0M450.5 348.2V361.0M453.5 348.2V361.0M459.5 294.8V318.8M459.5 360.9V403.0M462.5 294.8V310.8M464.5 360.9V403.0M466.5 348.2V360.8M469.5 348.2V360.8M475.5 294.7V316.7M475.5 360.8V403.0M478.5 294.7V308.7M480.5 360.7V403.0M482.5 348.2V360.7M485.5 348.2V360.6M491.5 294.7V317.7M491.5 360.6V403.0M494.5 294.7V309.7M497.5 360.5V403.0M499.5 348.2V360.5M502.5 348.2V360.5M508.5 294.7V318.7M508.5 360.4V403.0M511.5 294.7V310.7M513.5 360.4V403.0M515.5 348.2V360.4M518.5 348.2V360.3M524.5 294.7V316.7M524.5 360.3V403.0M527.5 294.7V308.7M529.5 360.2V403.0M531.5 348.2V360.2M534.5 348.2V360.2M540.5 294.7V317.7M540.5 360.1V403.0M543.5 294.7V309.7M546.5 360.0V403.0M548.5 348.1V360.0M551.5 348.1V360.0M557.5 294.7V318.7M557.5 359.9V403.0M560.5 294.7V310.7M562.5 359.7V403.0M564.5 348.1V359.7M567.5 348.1V359.6M573.5 294.7V316.7M573.5 359.5V403.0M576.5 294.7V308.7M578.5 359.4V403.0M580.5 348.1V359.4M583.5 348.1V359.3M589.5 294.7V317.7M589.5 359.2V403.0M592.5 294.7V309.7M595.5 359.0V403.0M597.5 348.1V359.0M600.5 348.1V358.9M606.5 294.7V318.7M606.5 358.8V403.0M609.5 294.7V310.7M611.5 358.7V403.0M613.5 348.1V358.6M616.5 348.1V358.6M622.5 294.6V316.6M622.5 358.4V403.0M625.5 294.6V308.6M627.5 358.3V403.0M629.5 348.1V358.2M632.5 348.1V358.2M638.5 294.6V317.6M638.5 358.0V403.0M641.5 294.6V309.6M644.5 357.8V403.0M646.5 348.0V357.8M649.5 348.0V357.7M655.5 294.6V318.6M655.5 357.5V403.0M658.5 294.6V310.6M660.5 357.3V403.0M662.5 348.0V357.3M665.5 348.0V357.2M671.5 294.6V316.6M671.5 357.0V403.0M674.5 294.6V308.6M676.5 356.9V403.0M678.5 348.0V356.8M681.5 348.0V356.8M687.5 316.7V339.7M687.5 356.8V403.0M690.5 336.4V351.4" stroke="#ff3408" stroke-width="1" fill="none"/>
<path d="M124.5 366.0V380.0M127.5 351.0V380.0M130.5 351.0V380.0M130.5 380.0V403.0M133.5 380.0V403.0M134.5 351.0V380.0M140.5 358.3V370.3M143.5 342.3V369.3M146.5 322.5V368.3M146.5 368.3V403.0M149.5 367.3V403.0M150.5 320.5V367.0M153.5 366.6V403.0M157.5 353.5V366.1M160.5 337.8V365.7M163.5 314.9V365.3M163.5 365.3V403.0M166.5 364.9V403.0M167.5 314.1V364.8M173.5 351.2V364.3M176.5 336.0V364.1M179.5 310.1V363.8M179.5 363.8V403.0M182.5 363.5V403.0M183.5 310.0V363.5M189.5 350.2V362.9M192.5 335.0V362.7M195.5 310.9V362.4M195.5 362.4V403.0M198.5 362.2V403.0M199.5 310.8V362.1M202.5 362.0V403.0M206.5 349.5V362.0M209.5 334.4V362.0M212.5 311.7V361.9M212.5 361.9V403.0M215.5 361.9V403.0M216.5 311.6V361.9M222.5 349.4V361.9M225.5 334.4V361.9M228.5 309.5V361.9M228.5 361.9V403.0M231.5 361.8V403.0M232.5 309.4V361.8M238.5 349.3V361.8M241.5 334.3V361.8M244.5 310.3V361.8M244.5 361.8V403.0M247.5 361.8V403.0M248.5 310.2V361.8M251.5 361.7V403.0M255.5 349.2V361.7M258.5 334.2V361.7M261.5 311.1V361.7M261.5 361.7V403.0M264.5 361.7V403.0M265.5 311.0V361.7M271.5 349.1V361.6M274.5 334.1V361.6M277.5 308.9V361.6M277.5 361.6V403.0M280.5 361.6V403.0M281.5 308.8V361.6M287.5 349.0V361.6M290.5 334.0V361.6M293.5 309.7V361.5M293.5 361.5V403.0M296.5 361.5V403.0M297.5 309.6V361.5M300.5 361.5V403.0M304.5 348.9V361.5M307.5 333.9V361.5M310.5 310.5V361.5M310.5 361.5V403.0M313.5 361.5V403.0M314.5 310.5V361.5M320.5 348.8V361.4M323.5 333.8V361.4M326.5 308.4V361.4M326.5 361.4V403.0M329.5 361.4V403.0M330.5 308.4V361.4M336.5 348.7V361.4M339.5 333.7V361.4M342.5 309.3V361.4M342.5 361.4V403.0M345.5 361.4V403.0M346.5 309.2V361.3M349.5 361.3V403.0M353.5 348.6V361.3M356.5 333.6V361.3M359.5 310.1V361.3M359.5 361.3V403.0M362.5 361.3V403.0M363.5 310.1V361.3M369.5 348.5V361.3M372.5 333.5V361.3M375.5 308.0V361.2M375.5 361.2V403.0M378.5 361.2V403.0M379.5 308.0V361.2M385.5 348.4V361.2M388.5 333.4V361.2M391.5 308.9V361.2M391.5 361.2V403.0M394.5 361.2V403.0M395.5 308.8V361.2M398.5 361.2V403.0M402.5 348.3V361.2M405.5 333.3V361.1M408.5 309.8V361.1M408.5 361.1V403.0M411.5 361.1V403.0M412.5 309.8V361.1M418.5 348.3V361.1M421.5 333.3V361.1M424.5 307.8V361.1M424.5 361.1V403.0M427.5 361.1V403.0M428.5 307.8V361.1M434.5 348.3V361.1M437.5 333.3V361.0M440.5 308.8V361.0M440.5 361.0V403.0M443.5 361.0V403.0M444.5 308.8V361.0M447.5 361.0V403.0M451.5 348.2V361.0M454.5 333.2V361.0M457.5 309.8V360.9M457.5 360.9V403.0M460.5 360.9V403.0M461.5 309.8V360.9M467.5 348.2V360.8M470.5 333.2V360.8M473.5 307.7V360.8M473.5 360.8V403.0M476.5 360.7V403.0M477.5 307.7V360.7M483.5 348.2V360.7M486.5 333.2V360.6M489.5 308.7V360.6M489.5 360.6V403.0M492.5 360.6V403.0M493.5 308.7V360.6M496.5 360.5V403.0M500.5 348.2V360.5M503.5 333.2V360.5M506.5 309.7V360.4M506.5 360.4V403.0M509.5 360.4V403.0M510.5 309.7V360.4M516.5 348.2V360.3M519.5 333.2V360.3M522.5 307.7V360.3M522.5 360.3V403.0M525.5 360.2V403.0M526.5 307.7V360.2M532.5 348.2V360.2M535.5 333.2V360.1M538.5 308.7V360.1M538.5 360.1V403.0M541.5 360.1V403.0M542.5 308.7V360.1M545.5 360.1V403.0M549.5 348.1V360.0M552.5 333.1V360.0M555.5 309.7V359.9M555.5 359.9V403.0M558.5 359.8V403.0M559.5 309.7V359.8M565.5 348.1V359.7M568.5 333.1V359.6M571.5 307.7V359.6M571.5 359.6V403.0M574.5 359.5V403.0M575.5 307.7V359.5M581.5 348.1V359.3M584.5 333.1V359.3M587.5 308.7V359.2M587.5 359.2V403.0M590.5 359.1V403.0M591.5 308.7V359.1M594.5 359.1V403.0M598.5 348.1V359.0M601.5 333.1V358.9M604.5 309.7V358.8M604.5 358.8V403.0M607.5 358.8V403.0M608.5 309.7V358.8M614.5 348.1V358.6M617.5 333.1V358.6M620.5 307.6V358.5M620.5 358.5V403.0M623.5 358.4V403.0M624.5 307.6V358.4M630.5 348.1V358.2M633.5 333.0V358.1M636.5 308.6V358.0M636.5 358.0V403.0M639.5 358.0V403.0M640.5 308.6V357.9M643.5 357.8V403.0M647.5 348.0V357.7M650.5 333.0V357.6M653.5 309.6V357.5M653.5 357.5V403.0M656.5 357.5V403.0M657.5 309.6V357.4M663.5 348.0V357.3M666.5 333.0V357.2M669.5 307.6V357.1M669.5 357.1V403.0M672.5 357.0V403.0M673.5 307.6V357.0M679.5 348.0V356.8M682.5 333.0V356.8M685.5 320.0V356.8M685.5 356.8V403.0M688.5 356.8V403.0M689.5 343.2V356.8M692.5 356.8V403.0" stroke="#6ea6e2" stroke-width="1" fill="none"/>
<path d="M129.5 338.0V351.0M130.5 338.0V351.0M133.5 338.0V350.0M134.5 338.0V351.0M145.5 309.0V323.0M146.5 308.5V322.5M149.5 307.0V320.0M150.5 306.5V320.5M153.5 304.7V331.7M162.5 300.1V315.1M163.5 299.9V314.9M166.5 299.3V313.3M167.5 299.1V314.1M178.5 297.3V310.3M179.5 297.1V310.1M182.5 297.0V309.0M183.5 297.0V310.0M194.5 296.9V310.9M195.5 296.9V310.9M198.5 296.8V309.8M199.5 296.8V310.8M202.5 296.8V323.8M211.5 296.7V311.7M212.5 296.7V311.7M215.5 296.6V310.6M216.5 296.6V311.6M227.5 296.5V309.5M228.5 296.5V309.5M231.5 296.4V308.4M232.5 296.4V309.4M243.5 296.3V310.3M244.5 296.3V310.3M247.5 296.2V309.2M248.5 296.2V310.2M251.5 296.2V323.2M260.5 296.1V311.1M261.5 296.1V311.1M264.5 296.0V310.0M265.5 296.0V311.0M276.5 295.9V308.9M277.5 295.9V308.9M280.5 295.8V307.8M281.5 295.8V308.8M292.5 295.7V309.7M293.5 295.7V309.7M296.5 295.6V308.6M297.5 295.6V309.6M300.5 295.6V322.6M309.5 295.5V310.5M310.5 295.5V310.5M313.5 295.5V309.5M314.5 295.5V310.5M325.5 295.4V308.4M326.5 295.4V308.4M329.5 295.4V307.4M330.5 295.4V308.4M341.5 295.3V309.3M342.5 295.3V309.3M345.5 295.2V308.2M346.5 295.2V309.2M349.5 295.2V322.2M358.5 295.1V310.1M359.5 295.1V310.1M362.5 295.1V309.1M363.5 295.1V310.1M374.5 295.0V308.0M375.5 295.0V308.0M378.5 295.0V307.0M379.5 295.0V308.0M390.5 294.9V308.9M391.5 294.9V308.9M394.5 294.8V307.8M395.5 294.8V308.8M398.5 294.8V321.8M407.5 294.8V309.8M408.5 294.8V309.8M411.5 294.8V308.8M412.5 294.8V309.8M423.5 294.8V307.8M424.5 294.8V307.8M427.5 294.8V306.8M428.5 294.8V307.8M439.5 294.8V308.8M440.5 294.8V308.8M443.5 294.8V307.8M444.5 294.8V308.8M447.5 294.8V321.8M456.5 294.8V309.8M457.5 294.8V309.8M460.5 294.8V308.8M461.5 294.8V309.8M472.5 294.7V307.7M473.5 294.7V307.7M476.5 294.7V306.7M477.5 294.7V307.7M488.5 294.7V308.7M489.5 294.7V308.7M492.5 294.7V307.7M493.5 294.7V308.7M496.5 294.7V321.7M505.5 294.7V309.7M506.5 294.7V309.7M509.5 294.7V308.7M510.5 294.7V309.7M521.5 294.7V307.7M522.5 294.7V307.7M525.5 294.7V306.7M526.5 294.7V307.7M537.5 294.7V308.7M538.5 294.7V308.7M541.5 294.7V307.7M542.5 294.7V308.7M545.5 294.7V321.7M554.5 294.7V309.7M555.5 294.7V309.7M558.5 294.7V308.7M559.5 294.7V309.7M570.5 294.7V307.7M571.5 294.7V307.7M574.5 294.7V306.7M575.5 294.7V307.7M586.5 294.7V308.7M587.5 294.7V308.7M590.5 294.7V307.7M591.5 294.7V308.7M594.5 294.7V321.7M603.5 294.7V309.7M604.5 294.7V309.7M607.5 294.7V308.7M608.5 294.7V309.7M619.5 294.6V307.6M620.5 294.6V307.6M623.5 294.6V306.6M624.5 294.6V307.6M635.5 294.6V308.6M636.5 294.6V308.6M639.5 294.6V307.6M640.5 294.6V308.6M643.5 294.6V321.6M652.5 294.6V309.6M653.5 294.6V309.6M656.5 294.6V308.6M657.5 294.6V309.6M668.5 294.6V307.6M669.5 294.6V307.6M672.5 294.6V306.6M673.5 294.6V307.6M684.5 303.3V317.3M685.5 306.0V320.0M688.5 322.0V335.0M689.5 329.2V343.2M692.5 354.4V356.8" stroke="#f0761e" stroke-width="1" fill="none"/>
<path d="M121.5 338.0V366.0M137.5 338.0V366.0M154.5 304.1V354.1M170.5 298.5V351.4M186.5 296.9V350.4M203.5 296.8V349.5M219.5 296.6V349.4M235.5 296.4V349.3M252.5 296.2V349.2M268.5 296.0V349.1M284.5 295.8V349.0M301.5 295.6V348.9M317.5 295.5V348.8M333.5 295.3V348.7M350.5 295.2V348.6M366.5 295.1V348.5M382.5 294.9V348.4M399.5 294.8V348.3M415.5 294.8V348.3M431.5 294.8V348.3M448.5 294.8V348.2M464.5 294.8V348.2M480.5 294.7V348.2M497.5 294.7V348.2M513.5 294.7V348.2M529.5 294.7V348.2M546.5 294.7V348.1M562.5 294.7V348.1M578.5 294.7V348.1M595.5 294.7V348.1M611.5 294.6V348.1M627.5 294.6V348.1M644.5 294.6V348.0M660.5 294.6V348.0M676.5 294.6V348.0" stroke="#ff3408" stroke-width="1" stroke-dasharray="2 2" fill="none"/>
<path d="M121.5 367.0V380.0M137.5 367.0V380.0M154.5 355.1V366.5M170.5 352.4V364.6M186.5 351.4V363.2M203.5 350.5V362.0M219.5 350.4V361.9M235.5 350.3V361.8M252.5 350.2V361.7M268.5 350.1V361.7M284.5 350.0V361.6M301.5 349.9V361.5M317.5 349.8V361.4M333.5 349.7V361.4M350.5 349.6V361.3M366.5 349.5V361.3M382.5 349.4V361.2M399.5 349.3V361.2M415.5 349.3V361.1M431.5 349.3V361.1M448.5 349.2V361.0M464.5 349.2V360.9M480.5 349.2V360.7M497.5 349.2V360.5M513.5 349.2V360.4M529.5 349.2V360.2M546.5 349.1V360.0M562.5 349.1V359.7M578.5 349.1V359.4M595.5 349.1V359.0M611.5 349.1V358.7M627.5 349.1V358.3M644.5 349.0V357.8M660.5 349.0V357.3M676.5 349.0V356.9" stroke="#0c1c2c" stroke-width="1" stroke-dasharray="2 2" fill="none"/>
<path d="M122.5 366.0V380.0M123.5 340.0V366.0M123.5 380.0V403.0M125.5 338.0V366.0M125.5 382.0V403.0M127.5 340.0V351.0M127.5 380.0V403.0M138.5 359.0V371.0M139.5 314.2V358.7M139.5 370.7V403.0M141.5 311.0V358.0M141.5 372.0V403.0M143.5 312.0V342.3M143.5 369.3V403.0M155.5 353.9V366.3M156.5 304.9V353.7M156.5 366.2V403.0M158.5 301.7V353.2M158.5 367.9V403.0M160.5 302.5V337.8M160.5 365.7V403.0M171.5 351.3V364.5M172.5 300.2V351.3M172.5 364.4V403.0M174.5 297.9V351.1M174.5 366.2V403.0M176.5 299.6V336.0M176.5 364.1V403.0M187.5 350.3V363.1M188.5 298.9V350.3M188.5 363.0V403.0M190.5 296.9V350.1M190.5 364.9V403.0M192.5 298.9V335.0M192.5 362.7V403.0M204.5 349.5V362.0M205.5 298.7V349.5M205.5 362.0V403.0M207.5 296.7V349.5M207.5 364.0V403.0M209.5 298.7V334.4M209.5 362.0V403.0M220.5 349.4V361.9M221.5 298.5V349.4M221.5 361.9V403.0M223.5 296.5V349.4M223.5 363.9V403.0M225.5 298.5V334.4M225.5 361.9V403.0M236.5 349.3V361.8M237.5 298.4V349.3M237.5 361.8V403.0M239.5 296.3V349.3M239.5 363.8V403.0M241.5 298.3V334.3M241.5 361.8V403.0M253.5 349.2V361.7M254.5 298.2V349.2M254.5 361.7V403.0M256.5 296.1V349.2M256.5 363.7V403.0M258.5 298.1V334.2M258.5 361.7V403.0M269.5 349.1V361.7M270.5 298.0V349.1M270.5 361.6V403.0M272.5 295.9V349.1M272.5 363.6V403.0M274.5 297.9V334.1M274.5 361.6V403.0M285.5 349.0V361.6M286.5 297.8V349.0M286.5 361.6V403.0M288.5 295.7V349.0M288.5 363.6V403.0M290.5 297.7V334.0M290.5 361.6V403.0M302.5 348.9V361.5M303.5 297.6V348.9M303.5 361.5V403.0M305.5 295.6V348.9M305.5 363.5V403.0M307.5 297.5V333.9M307.5 361.5V403.0M318.5 348.8V361.4M319.5 297.4V348.8M319.5 361.4V403.0M321.5 295.4V348.8M321.5 363.4V403.0M323.5 297.4V333.8M323.5 361.4V403.0M334.5 348.7V361.4M335.5 297.3V348.7M335.5 361.4V403.0M337.5 295.3V348.7M337.5 363.4V403.0M339.5 297.3V333.7M339.5 361.4V403.0M351.5 348.6V361.3M352.5 297.2V348.6M352.5 361.3V403.0M354.5 295.2V348.6M354.5 363.3V403.0M356.5 297.2V333.6M356.5 361.3V403.0M367.5 348.5V361.3M368.5 297.1V348.5M368.5 361.3V403.0M370.5 295.0V348.5M370.5 363.3V403.0M372.5 297.0V333.5M372.5 361.3V403.0M383.5 348.4V361.2M384.5 296.9V348.4M384.5 361.2V403.0M386.5 294.9V348.4M386.5 363.2V403.0M388.5 296.9V333.4M388.5 361.2V403.0M400.5 348.3V361.2M401.5 296.8V348.3M401.5 361.2V403.0M403.5 294.8V348.3M403.5 363.2V403.0M405.5 296.8V333.3M405.5 361.1V403.0M416.5 348.3V361.1M417.5 296.8V348.3M417.5 361.1V403.0M419.5 294.8V348.3M419.5 363.1V403.0M421.5 296.8V333.3M421.5 361.1V403.0M432.5 348.3V361.1M433.5 296.8V348.3M433.5 361.1V403.0M435.5 294.8V348.3M435.5 363.1V403.0M437.5 296.8V333.3M437.5 361.0V403.0M449.5 348.2V361.0M450.5 296.8V348.2M450.5 361.0V403.0M452.5 294.8V348.2M452.5 363.0V403.0M454.5 296.8V333.2M454.5 361.0V403.0M465.5 348.2V360.9M466.5 296.8V348.2M466.5 360.8V403.0M468.5 294.8V348.2M468.5 362.8V403.0M470.5 296.7V333.2M470.5 360.8V403.0M481.5 348.2V360.7M482.5 296.7V348.2M482.5 360.7V403.0M484.5 294.7V348.2M484.5 362.7V403.0M486.5 296.7V333.2M486.5 360.6V403.0M498.5 348.2V360.5M499.5 296.7V348.2M499.5 360.5V403.0M501.5 294.7V348.2M501.5 362.5V403.0M503.5 296.7V333.2M503.5 360.5V403.0M514.5 348.2V360.4M515.5 296.7V348.2M515.5 360.4V403.0M517.5 294.7V348.2M517.5 362.3V403.0M519.5 296.7V333.2M519.5 360.3V403.0M530.5 348.2V360.2M531.5 296.7V348.2M531.5 360.2V403.0M533.5 294.7V348.2M533.5 362.2V403.0M535.5 296.7V333.2M535.5 360.1V403.0M547.5 348.1V360.0M548.5 296.7V348.1M548.5 360.0V403.0M550.5 294.7V348.1M550.5 362.0V403.0M552.5 296.7V333.1M552.5 360.0V403.0M563.5 348.1V359.7M564.5 296.7V348.1M564.5 359.7V403.0M566.5 294.7V348.1M566.5 361.7V403.0M568.5 296.7V333.1M568.5 359.6V403.0M579.5 348.1V359.4M580.5 296.7V348.1M580.5 359.4V403.0M582.5 294.7V348.1M582.5 361.3V403.0M584.5 296.7V333.1M584.5 359.3V403.0M596.5 348.1V359.0M597.5 296.7V348.1M597.5 359.0V403.0M599.5 294.7V348.1M599.5 360.9V403.0M601.5 296.7V333.1M601.5 358.9V403.0M612.5 348.1V358.7M613.5 296.6V348.1M613.5 358.6V403.0M615.5 294.6V348.1M615.5 360.6V403.0M617.5 296.6V333.1M617.5 358.6V403.0M628.5 348.1V358.3M629.5 296.6V348.1M629.5 358.2V403.0M631.5 294.6V348.1M631.5 360.2V403.0M633.5 296.6V333.0M633.5 358.1V403.0M645.5 348.0V357.8M646.5 296.6V348.0M646.5 357.8V403.0M648.5 294.6V348.0M648.5 359.7V403.0M650.5 296.6V333.0M650.5 357.6V403.0M661.5 348.0V357.3M662.5 296.6V348.0M662.5 357.3V403.0M664.5 294.6V348.0M664.5 359.2V403.0M666.5 296.6V333.0M666.5 357.2V403.0M677.5 348.0V356.9M678.5 296.6V348.0M678.5 356.8V403.0M680.5 295.7V348.0M680.5 358.8V403.0M682.5 300.0V333.0M682.5 356.8V403.0" stroke="#c9a24e" stroke-width="1" stroke-dasharray="2 2" fill="none"/>
<path d="M122.5 382.0V403.0M124.5 340.0V366.0M126.5 382.0V403.0M138.5 373.0V403.0M140.5 313.5V358.3M142.5 371.7V403.0M155.5 368.3V403.0M157.5 304.3V353.5M159.5 367.8V403.0M171.5 366.5V403.0M173.5 300.1V351.2M175.5 366.1V403.0M187.5 365.1V403.0M189.5 298.9V350.2M191.5 364.8V403.0M204.5 364.0V403.0M206.5 298.7V349.5M208.5 364.0V403.0M220.5 363.9V403.0M222.5 298.5V349.4M224.5 363.9V403.0M236.5 363.8V403.0M238.5 298.3V349.3M240.5 363.8V403.0M253.5 363.7V403.0M255.5 298.1V349.2M257.5 363.7V403.0M269.5 363.7V403.0M271.5 297.9V349.1M273.5 363.6V403.0M285.5 363.6V403.0M287.5 297.8V349.0M289.5 363.6V403.0M302.5 363.5V403.0M304.5 297.6V348.9M306.5 363.5V403.0M318.5 363.4V403.0M320.5 297.4V348.8M322.5 363.4V403.0M334.5 363.4V403.0M336.5 297.3V348.7M338.5 363.4V403.0M351.5 363.3V403.0M353.5 297.2V348.6M355.5 363.3V403.0M367.5 363.3V403.0M369.5 297.0V348.5M371.5 363.3V403.0M383.5 363.2V403.0M385.5 296.9V348.4M387.5 363.2V403.0M400.5 363.2V403.0M402.5 296.8V348.3M404.5 363.2V403.0M416.5 363.1V403.0M418.5 296.8V348.3M420.5 363.1V403.0M432.5 363.1V403.0M434.5 296.8V348.3M436.5 363.0V403.0M449.5 363.0V403.0M451.5 296.8V348.2M453.5 363.0V403.0M465.5 362.9V403.0M467.5 296.8V348.2M469.5 362.8V403.0M481.5 362.7V403.0M483.5 296.7V348.2M485.5 362.6V403.0M498.5 362.5V403.0M500.5 296.7V348.2M502.5 362.5V403.0M514.5 362.4V403.0M516.5 296.7V348.2M518.5 362.3V403.0M530.5 362.2V403.0M532.5 296.7V348.2M534.5 362.2V403.0M547.5 362.0V403.0M549.5 296.7V348.1M551.5 362.0V403.0M563.5 361.7V403.0M565.5 296.7V348.1M567.5 361.6V403.0M579.5 361.4V403.0M581.5 296.7V348.1M583.5 361.3V403.0M596.5 361.0V403.0M598.5 296.7V348.1M600.5 360.9V403.0M612.5 360.7V403.0M614.5 296.6V348.1M616.5 360.6V403.0M628.5 360.3V403.0M630.5 296.6V348.1M632.5 360.2V403.0M645.5 359.8V403.0M647.5 296.6V348.0M649.5 359.7V403.0M661.5 359.3V403.0M663.5 296.6V348.0M665.5 359.2V403.0M677.5 358.9V403.0M679.5 296.6V348.0M681.5 358.8V403.0" stroke="#d4f3ff" stroke-width="1" stroke-dasharray="2 2" fill="none"/>
<path d="M128.5 382.0V403.0M144.5 371.0V403.0M161.5 367.5V403.0M177.5 366.0V403.0M193.5 364.6V403.0M210.5 363.9V403.0M226.5 363.9V403.0M242.5 363.8V403.0M259.5 363.7V403.0M275.5 363.6V403.0M291.5 363.5V403.0M308.5 363.5V403.0M324.5 363.4V403.0M340.5 363.4V403.0M357.5 363.3V403.0M373.5 363.3V403.0M389.5 363.2V403.0M406.5 363.1V403.0M422.5 363.1V403.0M438.5 363.0V403.0M455.5 362.9V403.0M471.5 362.8V403.0M487.5 362.6V403.0M504.5 362.5V403.0M520.5 362.3V403.0M536.5 362.1V403.0M553.5 361.9V403.0M569.5 361.6V403.0M585.5 361.2V403.0M602.5 360.9V403.0M618.5 360.5V403.0M634.5 360.1V403.0M651.5 359.6V403.0M667.5 359.1V403.0M683.5 358.8V403.0" stroke="#3a6a4a" stroke-width="1" stroke-dasharray="2 2" fill="none"/>
<path d="M138 371.0h1M138 359.0h1M139 370.7h1M139 358.7h1M140 370.3h1M140 358.3h1M141 370.0h1M141 358.0h1M142 369.7h1M142 357.7h1M143 369.3h1M144 369.0h1M145 368.7h1M146 368.3h1M147 368.0h1M148 367.7h1M149 367.3h1M150 367.0h1M151 366.9h1M152 366.7h1M153 366.6h1M154 366.5h1M154 354.1h1M155 366.3h1M155 353.9h1M156 366.2h1M156 353.7h1M157 366.1h1M157 353.5h1M158 365.9h1M158 353.2h1M159 365.8h1M159 353.0h1M160 365.7h1M161 365.5h1M162 365.4h1M163 365.3h1M164 365.1h1M165 365.0h1M166 364.9h1M167 364.8h1M168 364.7h1M169 364.7h1M170 364.6h1M170 351.4h1M171 364.5h1M171 351.3h1M172 364.4h1M172 351.3h1M173 364.3h1M173 351.2h1M174 364.2h1M174 351.1h1M175 364.1h1M175 351.1h1M176 364.1h1M177 364.0h1M178 363.9h1M179 363.8h1M180 363.7h1M181 363.6h1M182 363.5h1M183 363.5h1M184 363.4h1M185 363.3h1M186 363.2h1M186 350.4h1M187 363.1h1M187 350.3h1M188 363.0h1M188 350.3h1M189 362.9h1M189 350.2h1M190 362.9h1M190 350.1h1M191 362.8h1M191 350.1h1M192 362.7h1M193 362.6h1M194 362.5h1M195 362.4h1M196 362.3h1M197 362.3h1M198 362.2h1M199 362.1h1M200 362.0h1M201 362.0h1M202 362.0h1M203 362.0h1M203 349.5h1M204 362.0h1M204 349.5h1M205 362.0h1M205 349.5h1M206 362.0h1M206 349.5h1M207 362.0h1M207 349.5h1M208 362.0h1M208 349.5h1M209 362.0h1M210 361.9h1M211 361.9h1M212 361.9h1M213 361.9h1M214 361.9h1M215 361.9h1M216 361.9h1M217 361.9h1M218 361.9h1M219 361.9h1M219 349.4h1M220 361.9h1M220 349.4h1M221 361.9h1M221 349.4h1M222 361.9h1M222 349.4h1M223 361.9h1M223 349.4h1M224 361.9h1M224 349.4h1M225 361.9h1M226 361.9h1M227 361.9h1M228 361.9h1M229 361.9h1M230 361.9h1M231 361.8h1M232 361.8h1M233 361.8h1M234 361.8h1M235 361.8h1M235 349.3h1M236 361.8h1M236 349.3h1M237 361.8h1M237 349.3h1M238 361.8h1M238 349.3h1M239 361.8h1M239 349.3h1M240 361.8h1M240 349.3h1M241 361.8h1M242 361.8h1M243 361.8h1M244 361.8h1M245 361.8h1M246 361.8h1M247 361.8h1M248 361.8h1M249 361.8h1M250 361.8h1M251 361.7h1M252 361.7h1M252 349.2h1M253 361.7h1M253 349.2h1M254 361.7h1M254 349.2h1M255 361.7h1M255 349.2h1M256 361.7h1M256 349.2h1M257 361.7h1M257 349.2h1M258 361.7h1M259 361.7h1M260 361.7h1M261 361.7h1M262 361.7h1M263 361.7h1M264 361.7h1M265 361.7h1M266 361.7h1M267 361.7h1M268 361.7h1M268 349.1h1M269 361.7h1M269 349.1h1M270 361.6h1M270 349.1h1M271 361.6h1M271 349.1h1M272 361.6h1M272 349.1h1M273 361.6h1M273 349.1h1M274 361.6h1M275 361.6h1M276 361.6h1M277 361.6h1M278 361.6h1M279 361.6h1M280 361.6h1M281 361.6h1M282 361.6h1M283 361.6h1M284 361.6h1M284 349.0h1M285 361.6h1M285 349.0h1M286 361.6h1M286 349.0h1M287 361.6h1M287 349.0h1M288 361.6h1M288 349.0h1M289 361.6h1M289 349.0h1M290 361.6h1M291 361.5h1M292 361.5h1M293 361.5h1M294 361.5h1M295 361.5h1M296 361.5h1M297 361.5h1M298 361.5h1M299 361.5h1M300 361.5h1M301 361.5h1M301 348.9h1M302 361.5h1M302 348.9h1M303 361.5h1M303 348.9h1M304 361.5h1M304 348.9h1M305 361.5h1M305 348.9h1M306 361.5h1M306 348.9h1M307 361.5h1M308 361.5h1M309 361.5h1M310 361.5h1M311 361.5h1M312 361.5h1M313 361.5h1M314 361.5h1M315 361.4h1M316 361.4h1M317 361.4h1M317 348.8h1M318 361.4h1M318 348.8h1M319 361.4h1M319 348.8h1M320 361.4h1M320 348.8h1M321 361.4h1M321 348.8h1M322 361.4h1M322 348.8h1M323 361.4h1M324 361.4h1M325 361.4h1M326 361.4h1M327 361.4h1M328 361.4h1M329 361.4h1M330 361.4h1M331 361.4h1M332 361.4h1M333 361.4h1M333 348.7h1M334 361.4h1M334 348.7h1M335 361.4h1M335 348.7h1M336 361.4h1M336 348.7h1M337 361.4h1M337 348.7h1M338 361.4h1M338 348.7h1M339 361.4h1M340 361.4h1M341 361.4h1M342 361.4h1M343 361.4h1M344 361.4h1M345 361.4h1M346 361.3h1M347 361.3h1M348 361.3h1M349 361.3h1M350 361.3h1M350 348.6h1M351 361.3h1M351 348.6h1M352 361.3h1M352 348.6h1M353 361.3h1M353 348.6h1M354 361.3h1M354 348.6h1M355 361.3h1M355 348.6h1M356 361.3h1M357 361.3h1M358 361.3h1M359 361.3h1M360 361.3h1M361 361.3h1M362 361.3h1M363 361.3h1M364 361.3h1M365 361.3h1M366 361.3h1M366 348.5h1M367 361.3h1M367 348.5h1M368 361.3h1M368 348.5h1M369 361.3h1M369 348.5h1M370 361.3h1M370 348.5h1M371 361.3h1M371 348.5h1M372 361.3h1M373 361.3h1M374 361.3h1M375 361.2h1M376 361.2h1M377 361.2h1M378 361.2h1M379 361.2h1M380 361.2h1M381 361.2h1M382 361.2h1M382 348.4h1M383 361.2h1M383 348.4h1M384 361.2h1M384 348.4h1M385 361.2h1M385 348.4h1M386 361.2h1M386 348.4h1M387 361.2h1M387 348.4h1M388 361.2h1M389 361.2h1M390 361.2h1M391 361.2h1M392 361.2h1M393 361.2h1M394 361.2h1M395 361.2h1M396 361.2h1M397 361.2h1M398 361.2h1M399 361.2h1M399 348.3h1M400 361.2h1M400 348.3h1M401 361.2h1M401 348.3h1M402 361.2h1M402 348.3h1M403 361.2h1M403 348.3h1M404 361.2h1M404 348.3h1M405 361.1h1M406 361.1h1M407 361.1h1M408 361.1h1M409 361.1h1M410 361.1h1M411 361.1h1M412 361.1h1M413 361.1h1M414 361.1h1M415 361.1h1M415 348.3h1M416 361.1h1M416 348.3h1M417 361.1h1M417 348.3h1M418 361.1h1M418 348.3h1M419 361.1h1M419 348.3h1M420 361.1h1M420 348.3h1M421 361.1h1M422 361.1h1M423 361.1h1M424 361.1h1M425 361.1h1M426 361.1h1M427 361.1h1M428 361.1h1M429 361.1h1M430 361.1h1M431 361.1h1M431 348.3h1M432 361.1h1M432 348.3h1M433 361.1h1M433 348.3h1M434 361.1h1M434 348.3h1M435 361.1h1M435 348.3h1M436 361.0h1M436 348.3h1M437 361.0h1M438 361.0h1M439 361.0h1M440 361.0h1M441 361.0h1M442 361.0h1M443 361.0h1M444 361.0h1M445 361.0h1M446 361.0h1M447 361.0h1M448 361.0h1M448 348.2h1M449 361.0h1M449 348.2h1M450 361.0h1M450 348.2h1M451 361.0h1M451 348.2h1M452 361.0h1M452 348.2h1M453 361.0h1M453 348.2h1M454 361.0h1M455 360.9h1M456 360.9h1M457 360.9h1M458 360.9h1M459 360.9h1M460 360.9h1M461 360.9h1M462 360.9h1M463 360.9h1M464 360.9h1M464 348.2h1M465 360.9h1M465 348.2h1M466 360.8h1M466 348.2h1M467 360.8h1M467 348.2h1M468 360.8h1M468 348.2h1M469 360.8h1M469 348.2h1M470 360.8h1M471 360.8h1M472 360.8h1M473 360.8h1M474 360.8h1M475 360.8h1M476 360.7h1M477 360.7h1M478 360.7h1M479 360.7h1M480 360.7h1M480 348.2h1M481 360.7h1M481 348.2h1M482 360.7h1M482 348.2h1M483 360.7h1M483 348.2h1M484 360.7h1M484 348.2h1M485 360.6h1M485 348.2h1M486 360.6h1M487 360.6h1M488 360.6h1M489 360.6h1M490 360.6h1M491 360.6h1M492 360.6h1M493 360.6h1M494 360.6h1M495 360.6h1M496 360.5h1M497 360.5h1M497 348.2h1M498 360.5h1M498 348.2h1M499 360.5h1M499 348.2h1M500 360.5h1M500 348.2h1M501 360.5h1M501 348.2h1M502 360.5h1M502 348.2h1M503 360.5h1M504 360.5h1M505 360.4h1M506 360.4h1M507 360.4h1M508 360.4h1M509 360.4h1M510 360.4h1M511 360.4h1M512 360.4h1M513 360.4h1M513 348.2h1M514 360.4h1M514 348.2h1M515 360.4h1M515 348.2h1M516 360.3h1M516 348.2h1M517 360.3h1M517 348.2h1M518 360.3h1M518 348.2h1M519 360.3h1M520 360.3h1M521 360.3h1M522 360.3h1M523 360.3h1M524 360.3h1M525 360.2h1M526 360.2h1M527 360.2h1M528 360.2h1M529 360.2h1M529 348.2h1M530 360.2h1M530 348.2h1M531 360.2h1M531 348.2h1M532 360.2h1M532 348.2h1M533 360.2h1M533 348.2h1M534 360.2h1M534 348.2h1M535 360.1h1M536 360.1h1M537 360.1h1M538 360.1h1M539 360.1h1M540 360.1h1M541 360.1h1M542 360.1h1M543 360.1h1M544 360.1h1M545 360.1h1M546 360.0h1M546 348.1h1M547 360.0h1M547 348.1h1M548 360.0h1M548 348.1h1M549 360.0h1M549 348.1h1M550 360.0h1M550 348.1h1M551 360.0h1M551 348.1h1M552 360.0h1M553 359.9h1M554 359.9h1M555 359.9h1M556 359.9h1M557 359.9h1M558 359.8h1M559 359.8h1M560 359.8h1M561 359.8h1M562 359.7h1M562 348.1h1M563 359.7h1M563 348.1h1M564 359.7h1M564 348.1h1M565 359.7h1M565 348.1h1M566 359.7h1M566 348.1h1M567 359.6h1M567 348.1h1M568 359.6h1M569 359.6h1M570 359.6h1M571 359.6h1M572 359.5h1M573 359.5h1M574 359.5h1M575 359.5h1M576 359.4h1M577 359.4h1M578 359.4h1M578 348.1h1M579 359.4h1M579 348.1h1M580 359.4h1M580 348.1h1M581 359.3h1M581 348.1h1M582 359.3h1M582 348.1h1M583 359.3h1M583 348.1h1M584 359.3h1M585 359.2h1M586 359.2h1M587 359.2h1M588 359.2h1M589 359.2h1M590 359.1h1M591 359.1h1M592 359.1h1M593 359.1h1M594 359.1h1M595 359.0h1M595 348.1h1M596 359.0h1M596 348.1h1M597 359.0h1M597 348.1h1M598 359.0h1M598 348.1h1M599 358.9h1M599 348.1h1M600 358.9h1M600 348.1h1M601 358.9h1M602 358.9h1M603 358.9h1M604 358.8h1M605 358.8h1M606 358.8h1M607 358.8h1M608 358.8h1M609 358.7h1M610 358.7h1M611 358.7h1M611 348.1h1M612 358.7h1M612 348.1h1M613 358.6h1M613 348.1h1M614 358.6h1M614 348.1h1M615 358.6h1M615 348.1h1M616 358.6h1M616 348.1h1M617 358.6h1M618 358.5h1M619 358.5h1M620 358.5h1M621 358.5h1M622 358.4h1M623 358.4h1M624 358.4h1M625 358.4h1M626 358.3h1M627 358.3h1M627 348.1h1M628 358.3h1M628 348.1h1M629 358.2h1M629 348.1h1M630 358.2h1M630 348.1h1M631 358.2h1M631 348.1h1M632 358.2h1M632 348.1h1M633 358.1h1M634 358.1h1M635 358.1h1M636 358.0h1M637 358.0h1M638 358.0h1M639 358.0h1M640 357.9h1M641 357.9h1M642 357.9h1M643 357.8h1M644 357.8h1M644 348.0h1M645 357.8h1M645 348.0h1M646 357.8h1M646 348.0h1M647 357.7h1M647 348.0h1M648 357.7h1M648 348.0h1M649 357.7h1M649 348.0h1M650 357.6h1M651 357.6h1M652 357.6h1M653 357.5h1M654 357.5h1M655 357.5h1M656 357.5h1M657 357.4h1M658 357.4h1M659 357.4h1M660 357.3h1M660 348.0h1M661 357.3h1M661 348.0h1M662 357.3h1M662 348.0h1M663 357.3h1M663 348.0h1M664 357.2h1M664 348.0h1M665 357.2h1M665 348.0h1M666 357.2h1M667 357.1h1M668 357.1h1M669 357.1h1M670 357.1h1M671 357.0h1M672 357.0h1M673 357.0h1M674 356.9h1M675 356.9h1M676 356.9h1M676 348.0h1M677 356.9h1M677 348.0h1M678 356.8h1M678 348.0h1M679 356.8h1M679 348.0h1M680 356.8h1M680 348.0h1M681 356.8h1M681 348.0h1M682 356.8h1M683 356.8h1M684 356.8h1M685 356.8h1M686 356.8h1M687 356.8h1M688 356.8h1M689 356.8h1M690 356.8h1M691 356.8h1M692 356.8h1" stroke="#70d2f8" stroke-width="1" fill="none"/><g shape-rendering="auto"><rect x="120" y="371.6" width="15.9" height="4" fill="#7cf000"/>
<rect x="120" y="375.6" width="15.9" height="6.8" fill="#4fbaf6"/>
<path d="M678 171L680.2 215 681.5 246 684 241 688 238.5 693.5 238.5V276L690 279 688 282 685.5 283 682.5 262Z" fill="#4fbaf6"/>
<path d="M693 262V400" stroke="#ff3408" stroke-width="1.2"/>
<path d="M198 167H215V171H198ZM215 168H232V175H215ZM232 171H262V174H232ZM262 168.5H283V173H262ZM283 170H290V174H283ZM290 170H310V172.5H290ZM310 170H337V172H310ZM337 170H360V175H337ZM360 170H419.5V172H360ZM419.5 171H449V175H419.5ZM449 166H453V170.5H449ZM453 168.5H477V170.5H453ZM477 171H500V175H477ZM500 171H519V175H500ZM519 165.5H531V170.5H519ZM531 168.5H549V170.5H531ZM549 170.5H563V172H549ZM563 171H593V175H563ZM593 165.5H610V170.5H593ZM610 167.5H621V170.5H610ZM621 170H631V172H621ZM631 171H670V175H631ZM670 165.5H677.6V171.5H670Z" fill="#4fbaf6"/>
<path d="M139.2 243.0 140.2 241.2 139.4 237.3 141.3 241.2 140.9 242.3 143.6 247.7 142.9 243.9 144.6 242.8 143.9 239.1 145.6 238.0 144.9 234.3 146.6 233.2 145.9 229.6 147.6 228.7 146.9 225.1 148.6 224.2 147.9 220.6 149.6 219.7 149.0 216.0 150.8 215.1 150.2 211.4 152.0 210.5 151.4 206.8 153.3 205.5 152.9 201.6 154.8 200.3 154.4 196.3 156.9 195.6 157.1 192.2 159.6 191.5 160.4 188.1 163.6 187.4 162.9 183.7 164.6 182.8 163.9 179.1 165.6 178.2 165.4 178.8 167.6 182.2 168.4 178.3 171.6 180.7 171.9 177.6 174.6 177.2 176.4 173.5 180.6 174.1 182.4 171.9 189.0 172.0 198.0 169.5" stroke="#4fbaf6" stroke-width="2.3" fill="none" stroke-linejoin="miter"/>
<path d="M137.9 328V262L139 241" stroke="#4fbaf6" stroke-width="1.4" fill="none"/>
<path d="M139.2 330V280L140.4 247" stroke="#7cf000" stroke-width="1.4" fill="none"/>
<path d="M137.2 326V296" stroke="#e05040" stroke-width="0.8" fill="none" stroke-dasharray="5 7"/>
<path d="M141 236h1.5v1.5h-1.5zM146 229h1.5v1.5h-1.5zM152 204h1.5v1.5h-1.5zM160 188h1.5v1.5h-1.5zM166 176h1.5v1.5h-1.5zM175 174h1.5v1.5h-1.5zM207 166h1.5v1.5h-1.5zM210 167h1.5v1.5h-1.5zM214 168h1.5v1.5h-1.5zM238 176h1.5v1.5h-1.5zM262 175h1.5v1.5h-1.5zM286 174h1.5v1.5h-1.5zM327 174h1.5v1.5h-1.5zM345 169h1.5v1.5h-1.5zM352 168h1.5v1.5h-1.5zM365 169h1.5v1.5h-1.5zM372 170h1.5v1.5h-1.5zM386 170h1.5v1.5h-1.5zM421 173h1.5v1.5h-1.5zM430 174h1.5v1.5h-1.5zM520 165h1.5v1.5h-1.5zM533 167h1.5v1.5h-1.5zM552 173h1.5v1.5h-1.5zM568 175h1.5v1.5h-1.5zM596 165h1.5v1.5h-1.5zM606 166h1.5v1.5h-1.5zM614 167h1.5v1.5h-1.5zM633 170h1.5v1.5h-1.5zM643 176h1.5v1.5h-1.5zM671 165h1.5v1.5h-1.5zM185 171h1.5v1.5h-1.5z" fill="#ff2a10"/>
<path d="M140.5 247.0 142.5 243.6 143.5 245.4 145.2 249.6 145.0 251.4 146.3 249.8 145.6 245.8 146.9 244.2 146.2 240.2 147.5 238.6 147.2 234.9 149.0 233.6 148.8 229.9 150.5 228.6 150.2 224.9 152.0 223.6 151.8 219.9 153.5 218.6 153.2 214.9 155.0 213.6 154.8 209.9 156.5 208.6 157.0 204.9 159.5 203.6 160.0 199.9 162.5 198.6 163.5 198.9 166.5 196.1 167.5 196.9 170.5 194.1 171.5 194.4 174.5 192.1 176.5 192.4 180.5 191.1 182.5 191.4 186.5 191.1 188.0 188.3 190.2 194.0 195.9 188.3 198.1 194.0 203.8 188.3 206.0 194.0 211.7 188.3 213.9 194.0 219.6 188.3 221.8 194.0 227.5 188.3 229.7 194.0 235.4 188.3 237.6 194.0 243.3 188.3 245.5 194.0 251.2 188.3 253.4 194.0 259.1 189.3 261.3 193.1 267.0 189.3 269.2 193.1 274.9 189.3 277.1 193.1 282.8 189.3 285.0 193.1 290.7 189.3 292.9 193.1 298.6 189.3 300.8 193.1 306.0 191.6" stroke="#86f016" stroke-width="2.5" fill="none" stroke-linejoin="miter"/>
<path d="M304.5 190.6H677.4V193H304.5ZM304.5 188H308.7V190.7H304.5ZM308.7 192.9H312.7V195H308.7ZM312.7 188H316.9V190.7H312.7ZM316.9 192.9H320.9V195H316.9ZM320.9 188H325.1V190.7H320.9ZM325.1 192.9H329.1V195H325.1ZM329.1 188H333.3V190.7H329.1ZM333.3 192.9H337.3V195H333.3ZM337.3 188H341.5V190.7H337.3ZM341.5 192.9H345.5V195H341.5ZM345.5 188H349.7V190.7H345.5ZM349.7 192.9H353.7V195H349.7ZM353.7 188H357.9V190.7H353.7ZM357.9 192.9H361.9V195H357.9ZM361.9 188H366.1V190.7H361.9ZM366.1 192.9H370.1V195H366.1ZM370.1 188H374.3V190.7H370.1ZM374.3 192.9H378.3V195H374.3ZM378.3 188H382.5V190.7H378.3ZM382.5 192.9H386.5V195H382.5ZM386.5 188H390.7V190.7H386.5ZM390.7 192.9H394.7V195H390.7ZM394.7 188H398.9V190.7H394.7ZM398.9 192.9H402.9V195H398.9ZM402.9 188H407.1V190.7H402.9ZM407.1 192.9H411.1V195H407.1ZM411.1 188H415.3V190.7H411.1ZM415.3 192.9H419.3V195H415.3ZM419.3 188H423.5V190.7H419.3ZM423.5 192.9H427.5V195H423.5ZM427.5 188H431.7V190.7H427.5ZM431.7 192.9H435.7V195H431.7ZM435.7 188H439.9V190.7H435.7ZM439.9 192.9H443.9V195H439.9ZM443.9 188H448.1V190.7H443.9ZM448.1 192.9H452.1V195H448.1ZM452.1 188H456.3V190.7H452.1ZM456.3 192.9H460.3V195H456.3ZM460.3 188H464.5V190.7H460.3ZM464.5 192.9H468.5V195H464.5ZM468.5 188H472.7V190.7H468.5ZM472.7 192.9H476.7V195H472.7ZM476.7 188H480.9V190.7H476.7ZM480.9 192.9H484.9V195H480.9ZM484.9 188H489.1V190.7H484.9ZM489.1 192.9H493.1V195H489.1ZM493.1 188H497.3V190.7H493.1ZM497.3 192.9H501.3V195H497.3ZM501.3 188H505.5V190.7H501.3ZM505.5 192.9H509.5V195H505.5ZM509.5 188H513.7V190.7H509.5ZM513.7 192.9H517.7V195H513.7ZM517.7 188H521.9V190.7H517.7ZM521.9 192.9H525.9V195H521.9ZM525.9 188H530.1V190.7H525.9ZM530.1 192.9H534.1V195H530.1ZM534.1 188H538.3V190.7H534.1ZM538.3 192.9H542.3V195H538.3ZM542.3 188H546.5V190.7H542.3ZM546.5 192.9H550.5V195H546.5ZM550.5 188H554.7V190.7H550.5ZM554.7 192.9H558.7V195H554.7ZM558.7 188H562.9V190.7H558.7ZM562.9 192.9H566.9V195H562.9ZM566.9 188H571.1V190.7H566.9ZM571.1 192.9H575.1V195H571.1ZM575.1 188H579.3V190.7H575.1ZM579.3 192.9H583.3V195H579.3ZM583.3 188H587.5V190.7H583.3ZM587.5 192.9H591.5V195H587.5ZM591.5 188H595.7V190.7H591.5ZM595.7 192.9H599.7V195H595.7ZM599.7 188H603.9V190.7H599.7ZM603.9 192.9H607.9V195H603.9ZM607.9 188H612.1V190.7H607.9ZM612.1 192.9H616.1V195H612.1ZM616.1 188H620.3V190.7H616.1ZM620.3 192.9H624.3V195H620.3ZM624.3 188H628.5V190.7H624.3ZM628.5 192.9H632.5V195H628.5ZM632.5 188H636.7V190.7H632.5ZM636.7 192.9H640.7V195H636.7ZM640.7 188H644.9V190.7H640.7ZM644.9 192.9H648.9V195H644.9ZM648.9 188H653.1V190.7H648.9ZM653.1 192.9H657.1V195H653.1ZM657.1 188H661.3V190.7H657.1ZM661.3 192.9H665.3V195H661.3ZM665.3 188H669.5V190.7H665.3ZM669.5 192.9H673.5V195H669.5ZM673.5 188H677.4V190.7H673.5Z" fill="#84f814"/>
<path d="M676.5 190L679.5 215 684 270 693.3 368" stroke="#7cf000" stroke-width="3.6" fill="none"/>
<path d="M677.6 171L680 212 683 262" stroke="#4fbaf6" stroke-width="1.5" fill="none"/></g></g></svg>
<svg class="ic" style="left:0;top:0" width="840" height="624" shape-rendering="crispEdges"><path d="M74 402.5H79M74 381.5H79M74 360.5H79M74 339.5H79M74 318.5H79M74 296.5H79M74 275.5H79M74 254.5H79M74 233.5H79M74 212.5H79M74 191.5H79M74 169.5H79M74 148.5H79M74 127.5H79M74 117.5H79M114 402.5H119M114 380.5H119M114 358.5H119M114 335.5H119M114 313.5H119M114 291.5H119M114 269.5H119M114 246.5H119M114 224.5H119M114 202.5H119M114 180.5H119M114 157.5H119M114 135.5H119M114 117.5H119M120.5 404.4V408.6M165.5 404.4V408.6M211.5 404.4V408.6M256.5 404.4V408.6M302.5 404.4V408.6M347.5 404.4V408.6M393.5 404.4V408.6M438.5 404.4V408.6M484.5 404.4V408.6M529.5 404.4V408.6M575.5 404.4V408.6M620.5 404.4V408.6M666.5 404.4V408.6M693.5 404.4V408.6" stroke="#222" stroke-width="1" fill="none"/><path d="M77 398.5H79M77 394.5H79M77 390.5H79M77 385.5H79M77 377.5H79M77 373.5H79M77 368.5H79M77 364.5H79M77 356.5H79M77 351.5H79M77 347.5H79M77 343.5H79M77 335.5H79M77 330.5H79M77 326.5H79M77 322.5H79M77 313.5H79M77 309.5H79M77 305.5H79M77 301.5H79M77 292.5H79M77 288.5H79M77 284.5H79M77 279.5H79M77 271.5H79M77 267.5H79M77 263.5H79M77 258.5H79M77 250.5H79M77 246.5H79M77 241.5H79M77 237.5H79M77 229.5H79M77 224.5H79M77 220.5H79M77 216.5H79M77 207.5H79M77 203.5H79M77 199.5H79M77 195.5H79M77 186.5H79M77 182.5H79M77 178.5H79M77 174.5H79M77 165.5H79M77 161.5H79M77 157.5H79M77 152.5H79M77 144.5H79M77 140.5H79M77 135.5H79M77 131.5H79M77 123.5H79M77 119.5H79M117 398.5H119M117 393.5H119M117 389.5H119M117 384.5H119M117 376.5H119M117 371.5H119M117 367.5H119M117 362.5H119M117 353.5H119M117 349.5H119M117 344.5H119M117 340.5H119M117 331.5H119M117 327.5H119M117 322.5H119M117 318.5H119M117 309.5H119M117 304.5H119M117 300.5H119M117 295.5H119M117 286.5H119M117 282.5H119M117 278.5H119M117 273.5H119M117 264.5H119M117 260.5H119M117 255.5H119M117 251.5H119M117 242.5H119M117 237.5H119M117 233.5H119M117 229.5H119M117 220.5H119M117 215.5H119M117 211.5H119M117 206.5H119M117 197.5H119M117 193.5H119M117 188.5H119M117 184.5H119M117 175.5H119M117 171.5H119M117 166.5H119M117 162.5H119M117 153.5H119M117 148.5H119M117 144.5H119M117 139.5H119M117 130.5H119M117 126.5H119M117 122.5H119M129.5 404.4V406.6M138.5 404.4V406.6M147.5 404.4V406.6M156.5 404.4V406.6M175.5 404.4V406.6M184.5 404.4V406.6M193.5 404.4V406.6M202.5 404.4V406.6M220.5 404.4V406.6M229.5 404.4V406.6M238.5 404.4V406.6M247.5 404.4V406.6M265.5 404.4V406.6M275.5 404.4V406.6M284.5 404.4V406.6M293.5 404.4V406.6M311.5 404.4V406.6M320.5 404.4V406.6M329.5 404.4V406.6M338.5 404.4V406.6M356.5 404.4V406.6M365.5 404.4V406.6M375.5 404.4V406.6M384.5 404.4V406.6M402.5 404.4V406.6M411.5 404.4V406.6M420.5 404.4V406.6M429.5 404.4V406.6M447.5 404.4V406.6M456.5 404.4V406.6M465.5 404.4V406.6M475.5 404.4V406.6M493.5 404.4V406.6M502.5 404.4V406.6M511.5 404.4V406.6M520.5 404.4V406.6M538.5 404.4V406.6M547.5 404.4V406.6M556.5 404.4V406.6M566.5 404.4V406.6M584.5 404.4V406.6M593.5 404.4V406.6M602.5 404.4V406.6M611.5 404.4V406.6M629.5 404.4V406.6M638.5 404.4V406.6M647.5 404.4V406.6M656.5 404.4V406.6M675.5 404.4V406.6M684.5 404.4V406.6" stroke="#333" stroke-width="1" fill="none"/></svg>
<span class="t" style="left:68.22px;top:398px;font-size:10.2px;color:#1c1c2c;transform:scaleX(0.9300);line-height:11px;">0</span>
<span class="t" style="left:57.67px;top:376px;font-size:10.2px;color:#1c1c2c;transform:scaleX(0.9300);line-height:11px;">500</span>
<span class="t" style="left:52.40px;top:355px;font-size:10.2px;color:#1c1c2c;transform:scaleX(0.9300);line-height:11px;">1000</span>
<span class="t" style="left:52.40px;top:334px;font-size:10.2px;color:#1c1c2c;transform:scaleX(0.9300);line-height:11px;">1500</span>
<span class="t" style="left:52.40px;top:313px;font-size:10.2px;color:#1c1c2c;transform:scaleX(0.9300);line-height:11px;">2000</span>
<span class="t" style="left:52.40px;top:292px;font-size:10.2px;color:#1c1c2c;transform:scaleX(0.9300);line-height:11px;">2500</span>
<span class="t" style="left:52.40px;top:271px;font-size:10.2px;color:#1c1c2c;transform:scaleX(0.9300);line-height:11px;">3000</span>
<span class="t" style="left:52.40px;top:249px;font-size:10.2px;color:#1c1c2c;transform:scaleX(0.9300);line-height:11px;">3500</span>
<span class="t" style="left:52.40px;top:228px;font-size:10.2px;color:#1c1c2c;transform:scaleX(0.9300);line-height:11px;">4000</span>
<span class="t" style="left:52.40px;top:207px;font-size:10.2px;color:#1c1c2c;transform:scaleX(0.9300);line-height:11px;">4500</span>
<span class="t" style="left:52.40px;top:186px;font-size:10.2px;color:#1c1c2c;transform:scaleX(0.9300);line-height:11px;">5000</span>
<span class="t" style="left:52.40px;top:165px;font-size:10.2px;color:#1c1c2c;transform:scaleX(0.9300);line-height:11px;">5500</span>
<span class="t" style="left:52.40px;top:144px;font-size:10.2px;color:#1c1c2c;transform:scaleX(0.9300);line-height:11px;">6000</span>
<span class="t" style="left:44.49px;top:112px;font-size:10.2px;color:#1c1c2c;transform:scaleX(0.9300);line-height:11px;">6734.7</span>
<span class="t" style="left:107.32px;top:398px;font-size:10.2px;color:#1c1c2c;transform:scaleX(0.9300);line-height:11px;">0</span>
<span class="t" style="left:102.05px;top:375px;font-size:10.2px;color:#1c1c2c;transform:scaleX(0.9300);line-height:11px;">50</span>
<span class="t" style="left:96.77px;top:353px;font-size:10.2px;color:#1c1c2c;transform:scaleX(0.9300);line-height:11px;">100</span>
<span class="t" style="left:96.77px;top:331px;font-size:10.2px;color:#1c1c2c;transform:scaleX(0.9300);line-height:11px;">150</span>
<span class="t" style="left:96.77px;top:308px;font-size:10.2px;color:#1c1c2c;transform:scaleX(0.9300);line-height:11px;">200</span>
<span class="t" style="left:96.77px;top:286px;font-size:10.2px;color:#1c1c2c;transform:scaleX(0.9300);line-height:11px;">250</span>
<span class="t" style="left:96.77px;top:264px;font-size:10.2px;color:#1c1c2c;transform:scaleX(0.9300);line-height:11px;">300</span>
<span class="t" style="left:96.77px;top:242px;font-size:10.2px;color:#1c1c2c;transform:scaleX(0.9300);line-height:11px;">350</span>
<span class="t" style="left:96.77px;top:219px;font-size:10.2px;color:#1c1c2c;transform:scaleX(0.9300);line-height:11px;">400</span>
<span class="t" style="left:96.77px;top:197px;font-size:10.2px;color:#1c1c2c;transform:scaleX(0.9300);line-height:11px;">450</span>
<span class="t" style="left:96.77px;top:175px;font-size:10.2px;color:#1c1c2c;transform:scaleX(0.9300);line-height:11px;">500</span>
<span class="t" style="left:96.77px;top:153px;font-size:10.2px;color:#1c1c2c;transform:scaleX(0.9300);line-height:11px;">550</span>
<span class="t" style="left:96.77px;top:130px;font-size:10.2px;color:#1c1c2c;transform:scaleX(0.9300);line-height:11px;">600</span>
<span class="t" style="left:96.77px;top:112px;font-size:10.2px;color:#1c1c2c;transform:scaleX(0.9300);line-height:11px;">640</span>
<span class="t" style="left:117.61px;top:411px;font-size:10.2px;color:#1c1c2c;transform:scaleX(0.9500);line-height:11px;">0</span>
<span class="t" style="left:163.07px;top:411px;font-size:10.2px;color:#1c1c2c;transform:scaleX(0.9500);line-height:11px;">1</span>
<span class="t" style="left:208.53px;top:411px;font-size:10.2px;color:#1c1c2c;transform:scaleX(0.9500);line-height:11px;">2</span>
<span class="t" style="left:253.99px;top:411px;font-size:10.2px;color:#1c1c2c;transform:scaleX(0.9500);line-height:11px;">3</span>
<span class="t" style="left:299.45px;top:411px;font-size:10.2px;color:#1c1c2c;transform:scaleX(0.9500);line-height:11px;">4</span>
<span class="t" style="left:344.91px;top:411px;font-size:10.2px;color:#1c1c2c;transform:scaleX(0.9500);line-height:11px;">5</span>
<span class="t" style="left:390.37px;top:411px;font-size:10.2px;color:#1c1c2c;transform:scaleX(0.9500);line-height:11px;">6</span>
<span class="t" style="left:435.83px;top:411px;font-size:10.2px;color:#1c1c2c;transform:scaleX(0.9500);line-height:11px;">7</span>
<span class="t" style="left:481.29px;top:411px;font-size:10.2px;color:#1c1c2c;transform:scaleX(0.9500);line-height:11px;">8</span>
<span class="t" style="left:526.75px;top:411px;font-size:10.2px;color:#1c1c2c;transform:scaleX(0.9500);line-height:11px;">9</span>
<span class="t" style="left:569.51px;top:411px;font-size:10.2px;color:#1c1c2c;transform:scaleX(0.9500);line-height:11px;">10</span>
<span class="t" style="left:615.33px;top:411px;font-size:10.2px;color:#1c1c2c;transform:scaleX(0.9500);line-height:11px;">11</span>
<span class="t" style="left:660.43px;top:411px;font-size:10.2px;color:#1c1c2c;transform:scaleX(0.9500);line-height:11px;">12</span>
<span class="t" style="left:678.00px;top:411px;font-size:10.2px;color:#1c1c2c;transform:scaleX(0.9297);line-height:11px;clip-path:inset(0 3.6px 0 0);">12.599</span>
<span class="t" style="left:373.25px;top:425px;font-size:10.2px;color:#1c1c2c;transform:scaleX(0.9686);line-height:11px;">Time (S)</span>
<span class="t" style="left:36.5px;top:256.5px;font-size:10.2px;color:#40202c;transform:translate(-50%,-50%) rotate(-90deg) scaleX(.95);transform-origin:50% 50%">Load (N)</span>
<span class="t" style="left:87.5px;top:281px;font-size:10.2px;color:#40202c;transform:translate(-50%,-50%) rotate(-90deg) scaleX(.985);transform-origin:50% 50%">Displacement (mm)</span>
<svg class="ic" style="left:713px;top:112.90px" width="24" height="15" viewBox="0 0 24 15"><rect width="24" height="15" fill="#000"/><path d="M1.7 11.3L8.6 2.9 16.2 10.8 22.8 2.4" stroke="#4aa3dc" stroke-width="1.1" fill="none"/></svg>
<span class="t" style="left:741.70px;top:115px;font-size:10.2px;color:#141420;transform:scaleX(0.9957);line-height:11px;">blue</span>
<svg class="ic" style="left:713px;top:132.74px" width="24" height="15" viewBox="0 0 24 15"><rect width="24" height="15" fill="#000"/><path d="M1.7 11.3L8.6 2.9 16.2 10.8 22.8 2.4" stroke="#5fe000" stroke-width="1.1" fill="none"/></svg>
<span class="t" style="left:741.70px;top:135px;font-size:10.2px;color:#141420;transform:scaleX(0.9737);line-height:11px;">green</span>
<svg class="ic" style="left:713px;top:152.59px" width="24" height="15" viewBox="0 0 24 15"><rect width="24" height="15" fill="#000"/><path d="M1.7 11.3L8.6 2.9 16.2 10.8 22.8 2.4" stroke="#e02810" stroke-width="1.1" fill="none"/></svg>
<span class="t" style="left:741.70px;top:154px;font-size:10.2px;color:#141420;transform:scaleX(0.9362);line-height:11px;">red</span>
<svg class="ic" style="left:713px;top:172.43px" width="24" height="15" viewBox="0 0 24 15"><rect width="24" height="15" fill="#000"/><path d="M1.7 11.3L8.6 2.9 16.2 10.8 22.8 2.4" stroke="#d8d020" stroke-width="1.1" fill="none"/></svg>
<span class="t" style="left:741.70px;top:174px;font-size:10.2px;color:#141420;transform:scaleX(1.0126);line-height:11px;">yellow</span>
<svg class="ic" style="left:713px;top:192.27px" width="24" height="15" viewBox="0 0 24 15"><rect width="24" height="15" fill="#000"/><path d="M1.7 11.3L8.6 2.9 16.2 10.8 22.8 2.4" stroke="#d0d0d0" stroke-width="1.1" fill="none" stroke-dasharray="2 1.6"/></svg>
<span class="t" style="left:741.70px;top:194px;font-size:10.2px;color:#141420;line-height:11px;">black</span>
<svg class="ic" style="left:713px;top:212.12px" width="24" height="15" viewBox="0 0 24 15"><rect width="24" height="15" fill="#000"/><path d="M1.7 11.3L8.6 2.9 16.2 10.8 22.8 2.4" stroke="#d8d8d8" stroke-width="1.1" fill="none"/></svg>
<span class="t" style="left:741.70px;top:214px;font-size:10.2px;color:#141420;transform:scaleX(1.0248);line-height:11px;">white</span>
<svg class="ic" style="left:713px;top:231.96px" width="24" height="15" viewBox="0 0 24 15"><rect width="24" height="15" fill="#000"/><path d="M1.7 11.3L8.6 2.9 16.2 10.8 22.8 2.4" stroke="#e07818" stroke-width="1.1" fill="none"/></svg>
<span class="t" style="left:741.70px;top:234px;font-size:10.2px;color:#141420;transform:scaleX(0.9856);line-height:11px;">orange</span>
<svg class="ic" style="left:713px;top:251.80px" width="24" height="15" viewBox="0 0 24 15"><rect width="24" height="15" fill="#000"/><path d="M1.7 11.3L8.6 2.9 16.2 10.8 22.8 2.4" stroke="#a8a8a8" stroke-width="1.1" fill="none"/></svg>
<span class="t" style="left:741.70px;top:254px;font-size:10.2px;color:#141420;transform:scaleX(0.9677);line-height:11px;">grey</span>
<svg class="ic" style="left:713px;top:271.64px" width="24" height="15" viewBox="0 0 24 15"><rect width="24" height="15" fill="#000"/><path d="M1.7 11.3L8.6 2.9 16.2 10.8 22.8 2.4" stroke="#b05818" stroke-width="1.1" fill="none"/></svg>
<span class="t" style="left:741.70px;top:273px;font-size:10.2px;color:#141420;transform:scaleX(0.9900);line-height:11px;">brown</span>
<svg class="ic" style="left:713px;top:291.49px" width="24" height="15" viewBox="0 0 24 15"><rect width="24" height="15" fill="#000"/><path d="M1.7 11.3L8.6 2.9 16.2 10.8 22.8 2.4" stroke="#20d878" stroke-width="1.1" fill="none"/></svg>
<span class="t" style="left:741.70px;top:293px;font-size:10.2px;color:#141420;line-height:11px;">teal</span>
<svg class="ic" style="left:713px;top:311.33px" width="24" height="15" viewBox="0 0 24 15"><rect width="24" height="15" fill="#000"/><path d="M1.7 11.3L8.6 2.9 16.2 10.8 22.8 2.4" stroke="#4a9ae0" stroke-width="1.1" fill="none"/></svg>
<span class="t" style="left:741.70px;top:313px;font-size:10.2px;color:#141420;transform:scaleX(0.9682);line-height:11px;">String Pot 1</span>
<svg class="ic" style="left:713px;top:331.17px" width="24" height="15" viewBox="0 0 24 15"><rect width="24" height="15" fill="#000"/><path d="M1.7 11.3L8.6 2.9 16.2 10.8 22.8 2.4" stroke="#e03818" stroke-width="1.1" fill="none"/></svg>
<span class="t" style="left:741.70px;top:333px;font-size:10.2px;color:#141420;transform:scaleX(0.9682);line-height:11px;">String Pot 2</span>
<svg class="ic" style="left:713px;top:351.02px" width="24" height="15" viewBox="0 0 24 15"><rect width="24" height="15" fill="#000"/><path d="M1.7 11.3L8.6 2.9 16.2 10.8 22.8 2.4" stroke="#d8d8d8" stroke-width="1.1" fill="none" stroke-dasharray="2 1.6"/></svg>
<span class="t" style="left:741.70px;top:353px;font-size:10.2px;color:#141420;transform:scaleX(0.9682);line-height:11px;">String Pot 3</span>
<svg class="ic" style="left:713px;top:370.86px" width="24" height="15" viewBox="0 0 24 15"><rect width="24" height="15" fill="#000"/><path d="M1.7 11.3L8.6 2.9 16.2 10.8 22.8 2.4" stroke="#e07818" stroke-width="1.1" fill="none"/></svg>
<span class="t" style="left:741.70px;top:373px;font-size:10.2px;color:#141420;transform:scaleX(0.9682);line-height:11px;">String Pot 4</span>
<svg class="ic" style="left:713px;top:390.70px" width="24" height="15" viewBox="0 0 24 15"><rect width="24" height="15" fill="#000"/><path d="M1.7 11.3L8.6 2.9 16.2 10.8 22.8 2.4" stroke="#a04010" stroke-width="1.1" fill="none"/></svg>
<span class="t" style="left:741.70px;top:393px;font-size:10.2px;color:#141420;transform:scaleX(0.9682);line-height:11px;">String Pot 5</span>
<div class="abs" style="left:703px;top:416px;width:17px;height:14px;background:#c6c6c6;border:1px solid #8a8a8a;border-top-color:#ececec;border-left-color:#ececec;box-sizing:border-box"></div>
<div class="abs" style="left:721px;top:416px;width:17px;height:14px;background:#727272;border:1px solid #a0a0a0;border-top-color:#4c4c4c;border-left-color:#4c4c4c;box-sizing:border-box"></div>
<div class="abs" style="left:739px;top:416px;width:17px;height:14px;background:#c6c6c6;border:1px solid #8a8a8a;border-top-color:#ececec;border-left-color:#ececec;box-sizing:border-box"></div>
<svg class="ic" style="left:703px;top:416px" width="54" height="14" viewBox="703 416 54 14"><path d="M711.7 417.6V428.6M706 423.4H717.4" stroke="#0a0a0a" stroke-width="1.3" fill="none"/><circle cx="711.7" cy="423.4" r="1.3" fill="#c6c6c6" stroke="#0a0a0a" stroke-width="0.8"/><rect x="705.6" y="418.6" width="2" height="2" fill="#2ea82e"/><path d="M729 423.6L724.3 428.6" stroke="#0a0a0a" stroke-width="2.2"/><circle cx="731.4" cy="420.9" r="3.5" fill="#eef3ff" stroke="#0a0a0a" stroke-width="1.2"/><path d="M729.4 420.9h4M731.4 418.9v4" stroke="#2a3a90" stroke-width="1.1"/><rect x="723.6" y="418.6" width="2.2" height="2.2" fill="#38e038"/><path d="M731.5 426.2l4.4 2.6-4.6 0.4z" fill="#111"/><path d="M746 429L743.2 424.6 742.7 423 743.8 422.6 745.4 424.4V419.3q.7-.8 1.4 0v2.6-3.4q.7-.8 1.4 0v3.4-3q.7-.8 1.4 0v3.4-2q.7-.7 1.3 0v4.6L751.4 429Z" fill="#fff" stroke="#0a0a0a" stroke-width="0.9" stroke-linejoin="round"/><rect x="741.3" y="418.4" width="2" height="2" fill="#2a7a2a"/></svg>
<svg class="ic" style="left:773px;top:406px" width="31" height="31" viewBox="-15.5 -15.5 31 31"><path d="M0 -13.4L13.4 0 0 13.4 -13.4 0Z" fill="#fff"/><path d="M-13.2 0L-6.9 -6.3 -0.6 0 -6.9 6.3Z" fill="#4a4a4a" stroke="#3a3a3a" stroke-width="0.8"/><path d="M0 -13.2L6.3 -6.9 0 -0.6 -6.3 -6.9Z" fill="#fff" stroke="#444" stroke-width="1"/><path d="M13.2 0L6.9 6.3 0.6 0 6.9 -6.3Z" fill="#fff" stroke="#444" stroke-width="1"/><path d="M0 13.2L-6.3 6.9 0 0.6 6.3 6.9Z" fill="#fff" stroke="#444" stroke-width="1"/><path d="M4.2 1.2l3 2.6 2.2-1.2" stroke="#555" stroke-width="0.9" fill="none"/></svg>
<div class="box" style="left:112px;top:451px;width:589px;height:70px"></div>
<div class="box" style="left:112px;top:522px;width:589px;height:27px"></div>
<div class="box" style="left:112px;top:552px;width:589px;height:28px"></div>
<span class="t" style="left:130.70px;top:464px;font-size:10.2px;font-weight:bold;transform:scaleX(0.8846);line-height:11px;">Cursors:</span>
<div class="abs" style="left:235.3px;top:462.5px;width:1.2px;height:45.5px;background:#222"></div>
<div class="abs" style="left:331.8px;top:462.5px;width:1.2px;height:45.5px;background:#222"></div>
<span class="t" style="left:241.00px;top:464px;font-size:10.2px;font-weight:bold;transform:scaleX(0.9260);line-height:11px;">X</span>
<span class="t" style="left:337.30px;top:464px;font-size:10.2px;font-weight:bold;transform:scaleX(0.9260);line-height:11px;">Y</span>
<span class="t" style="left:431.70px;top:460px;font-size:10.2px;transform:scaleX(0.9634);line-height:11px;">Time (S)</span>
<span class="t" style="left:430.00px;top:485px;font-size:10.2px;transform:scaleX(0.9828);line-height:11px;">Load (N)</span>
<span class="t" style="left:407.30px;top:510px;font-size:10.2px;line-height:11px;clip-path:inset(0 0 1.6px 0);">Displacement</span>
<svg class="ic" style="left:478px;top:455px" width="56" height="16" viewBox="478 455 56 16"><rect x="481.6" y="464.1" width="6" height="4.3" rx="0.8" fill="#e8e8e8" stroke="#0c0c0c" stroke-width="1.5"/><path d="M482.9 464v-1.7a1.75 1.75 0 0 1 3.5 0v1.7" stroke="#0c0c0c" stroke-width="1.3" fill="none"/><rect x="484" y="465.4" width="1.3" height="1.7" fill="#111"/><rect x="496.8" y="457.6" width="2.2" height="2.2" fill="#3fe23f"/><path d="M501 458.8V465.2H508.8M501 465.2L498 467.8" stroke="#111" stroke-width="1.2" fill="none"/><path d="M525 465.1h5.2l-2.6 2.6z" fill="#111"/></svg>
<span class="t" style="left:503.90px;top:457px;font-size:7.6px;color:#111;transform:scaleX(1.0258);line-height:9px;">X</span>
<span class="t" style="left:514.90px;top:455px;font-size:8.6px;font-weight:bold;color:#3a3a3a;transform:scaleX(0.9082);line-height:10px;">x.xx</span>
<svg class="ic" style="left:478px;top:480px" width="56" height="16" viewBox="478 480 56 16"><rect x="481.6" y="489.5" width="6" height="4" rx="0.8" fill="#e8e8e8" stroke="#0c0c0c" stroke-width="1.5"/><path d="M486.6 489.4v-1.6a1.7 1.7 0 0 0 -3.3 -0.6" stroke="#0c0c0c" stroke-width="1.3" fill="none"/><rect x="484" y="490.7" width="1.3" height="1.5" fill="#111"/><rect x="496.9" y="482.7" width="2" height="2" fill="#3c3c3c"/><path d="M501.5 482.8V490" stroke="#111" stroke-width="2" fill="none"/><path d="M500 490H507.6M501.2 490L498 492.7" stroke="#111" stroke-width="1.2" fill="none"/><path d="M525 490.1h5.2l-2.6 2.6z" fill="#111"/></svg>
<span class="t" style="left:503.90px;top:482px;font-size:7.6px;color:#111;transform:scaleX(1.0258);line-height:9px;">Y</span>
<span class="t" style="left:514.90px;top:480px;font-size:8.6px;font-weight:bold;color:#3a3a3a;transform:scaleX(0.9442);line-height:10px;clip-path:inset(0 0 2.2px 0);">y.yy</span>
<svg class="ic" style="left:478px;top:504.70000000000005px" width="56" height="16" viewBox="478 504.70000000000005 56 16"><rect x="481.6" y="514.2" width="6" height="4" rx="0.8" fill="#e8e8e8" stroke="#0c0c0c" stroke-width="1.5"/><path d="M486.6 514.1v-1.6a1.7 1.7 0 0 0 -3.3 -0.6" stroke="#0c0c0c" stroke-width="1.3" fill="none"/><rect x="484" y="515.4000000000001" width="1.3" height="1.5" fill="#111"/><rect x="496.9" y="507.40000000000003" width="2" height="2" fill="#3c3c3c"/><path d="M501.5 507.50000000000006V514.7" stroke="#111" stroke-width="2" fill="none"/><path d="M500 514.7H507.6M501.2 514.7L498 517.4000000000001" stroke="#111" stroke-width="1.2" fill="none"/><path d="M525 514.8000000000001h5.2l-2.6 2.6z" fill="#111"/></svg>
<span class="t" style="left:503.90px;top:507px;font-size:7.6px;color:#111;transform:scaleX(1.0258);line-height:9px;">Y</span>
<span class="t" style="left:514.90px;top:505px;font-size:8.6px;font-weight:bold;color:#3a3a3a;transform:scaleX(0.9442);line-height:10px;clip-path:inset(0 0 2.2px 0);">y.yy</span>
<span class="t" style="left:129.30px;top:530px;font-size:10.2px;transform:scaleX(0.9841);line-height:11px;">Stable Time</span>
<div class="inp" style="left:185px;top:528px;width:72px;height:18px"></div>
<span class="t" style="left:188.40px;top:532px;font-size:10.2px;transform:scaleX(0.9168);line-height:11px;">200</span>
<span class="t" style="left:342.40px;top:530px;font-size:10.2px;transform:scaleX(0.9916);line-height:11px;">Tolerance (N)</span>
<div class="inp" style="left:406px;top:528px;width:75px;height:18px"></div>
<span class="t" style="left:409.50px;top:532px;font-size:10.2px;transform:scaleX(0.9168);line-height:11px;">100</span>
<span class="t" style="left:569.30px;top:530px;font-size:10.2px;transform:scaleX(0.9624);line-height:11px;">Offset (%)</span>
<div class="inp" style="left:617px;top:528px;width:73px;height:18px"></div>
<span class="t" style="left:620.70px;top:532px;font-size:10.2px;transform:scaleX(0.8991);line-height:11px;">10</span>
<span class="t" style="left:128.30px;top:562px;font-size:10.2px;line-height:11px;">Operator</span>
<div class="inp" style="left:171px;top:558px;width:199px;height:18px"></div>
<span class="t" style="left:175.00px;top:562px;font-size:10.2px;transform:scaleX(1.0204);line-height:11px;">Admin</span>
<span class="t" style="left:407.00px;top:562px;font-size:10.2px;transform:scaleX(1.0042);line-height:11px;">Test Time \ Date</span>
<div class="inp" style="left:484px;top:558px;width:206px;height:18px"></div>
<span class="t" style="left:487.30px;top:562px;font-size:10.2px;transform:scaleX(0.9518);line-height:11px;">10:40:40 - 20/12/2018</span>
<div class="btn" style="left:707px;top:449px"></div>
<span class="t" style="left:734.50px;top:453px;font-size:10.2px;transform:scaleX(0.9724);line-height:11px;">Open File</span>
<div class="btn" style="left:707px;top:474px"></div>
<span class="t" style="left:720.50px;top:478px;font-size:10.2px;transform:scaleX(1.0184);line-height:11px;">Print Certificate</span>
<div class="btn" style="left:707px;top:501px"></div>
<span class="t" style="left:712.00px;top:505px;font-size:10.2px;transform:scaleX(0.9240);line-height:11px;">Save Results to CSV</span>
<div class="btn foc" style="left:707px;top:529px"></div>
<span class="t" style="left:748.25px;top:533px;font-size:10.2px;transform:scaleX(0.9116);line-height:11px;">Exit</span>
<div class="btn" style="left:707px;top:557px"></div>
<span class="t" style="left:730.50px;top:561px;font-size:10.2px;transform:scaleX(0.9779);line-height:11px;">Print Graph</span>
<div class="btn" style="left:707px;top:585px"></div>
<span class="t" style="left:719.25px;top:589px;font-size:10.2px;transform:scaleX(1.0457);line-height:11px;">File Information</span>
</body></html>
